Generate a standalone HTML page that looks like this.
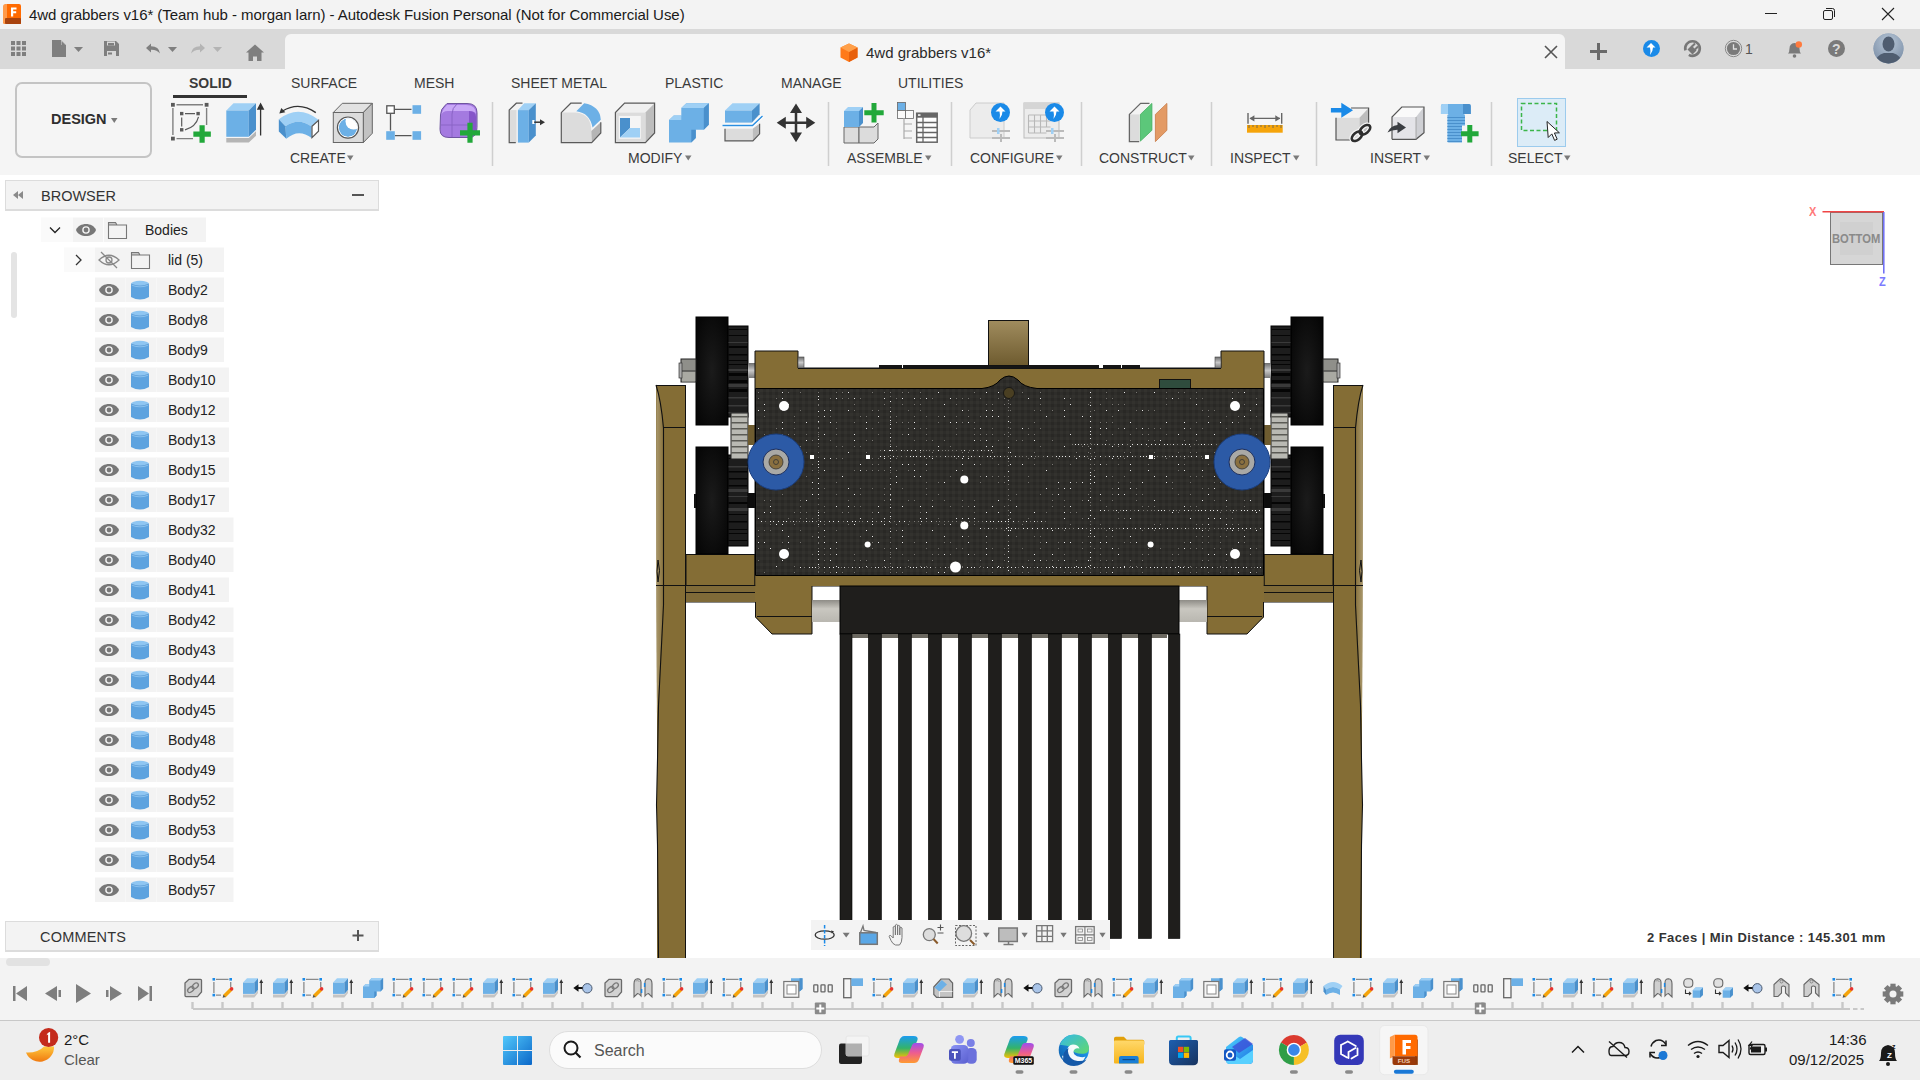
<!DOCTYPE html>
<html><head><meta charset="utf-8"><title>Fusion</title><style>
*{margin:0;padding:0;box-sizing:border-box}
html,body{width:1920px;height:1080px;overflow:hidden;background:#fff;font-family:"Liberation Sans",sans-serif;color:#3c3c3c}
.a{position:absolute}
.t{position:absolute;white-space:nowrap;line-height:1}
svg{position:absolute;overflow:visible}
</style></head>
<body>
<div class="a" style="left:0;top:0;width:1920px;height:29px;background:#f3f3f3"></div>
<div class="a" style="left:0;top:29px;width:1920px;height:40px;background:#d9d9d9"></div>
<div class="a" style="left:285px;top:34px;width:1280px;height:35px;background:#f5f5f5;border-radius:6px 6px 0 0"></div>
<div class="a" style="left:0;top:69px;width:1920px;height:106px;background:#f5f5f5"></div>
<div class="a" style="left:0;top:958px;width:1920px;height:62px;background:#f3f3f3"></div>
<div class="a" style="left:0;top:1020px;width:1920px;height:1px;background:#c8c8c8"></div>
<div class="a" style="left:0;top:1021px;width:1920px;height:59px;background:#eeeeee"></div>
<svg class="a" style="left:0;top:0" width="30" height="29" viewBox="0 0 30 29">
<path d="M4.5,6 Q4.5,4 6.5,4 L19,4 Q21,4 21,6 L21,24 L5,24 Q3,24 3,22 L3,7 Z" fill="#ff6a00"/>
<path d="M3,6.5 Q3,4 5.5,4 L7,4 L7,24 L5,24 Q3,24 3,22 Z" fill="#ff9a4a"/>
<rect x="5" y="18" width="16" height="6" rx="1" fill="#a8430e"/>
<path d="M11,7.5 h5.5 v2 h-3.3 v1.8 h3 v2 h-3 v3.2 h-2.2 z" fill="#fff"/>
</svg>
<div class="t" style="left:29px;top:7px;font-size:15px;color:#1a1a1a;letter-spacing:-0.05px">4wd grabbers v16* (Team hub - morgan larn) - Autodesk Fusion Personal (Not for Commercial Use)</div>
<div class="a" style="left:1765px;top:13px;width:12px;height:1px;background:#222"></div>
<svg class="a" style="left:1820px;top:5px" width="20" height="20" viewBox="0 0 20 20">
<rect x="3.5" y="5.5" width="9" height="9" rx="1.5" fill="none" stroke="#222" stroke-width="1"/>
<path d="M6,3.5 h6.5 q2,0 2,2 v6.5" fill="none" stroke="#222" stroke-width="1"/></svg>
<svg class="a" style="left:1878px;top:4px" width="20" height="20" viewBox="0 0 20 20">
<path d="M4,4 L16,16 M16,4 L4,16" stroke="#222" stroke-width="1.1"/></svg>
<svg class="a" style="left:0;top:29px" width="290" height="40" viewBox="0 29 290 40"><rect x="11.0" y="41.0" width="4" height="4" fill="#7f7f7f"/><rect x="11.0" y="46.5" width="4" height="4" fill="#7f7f7f"/><rect x="11.0" y="52.0" width="4" height="4" fill="#7f7f7f"/><rect x="16.5" y="41.0" width="4" height="4" fill="#7f7f7f"/><rect x="16.5" y="46.5" width="4" height="4" fill="#7f7f7f"/><rect x="16.5" y="52.0" width="4" height="4" fill="#7f7f7f"/><rect x="22.0" y="41.0" width="4" height="4" fill="#7f7f7f"/><rect x="22.0" y="46.5" width="4" height="4" fill="#7f7f7f"/><rect x="22.0" y="52.0" width="4" height="4" fill="#7f7f7f"/><path d="M52,40 h9 l5,5 v12 h-14 z" fill="#7f7f7f"/><path d="M61,40 v5 h5" fill="#d9d9d9"/><path d="M61.5,41 l4,4 h-4z" fill="#7f7f7f"/><path d="M74,47 h9 l-4.5,5 z" fill="#7f7f7f"/><path d="M104,41 h12 l3,3 v12 h-15 z" fill="#7f7f7f"/><rect x="107" y="41.5" width="8" height="4" fill="#d9d9d9"/><rect x="108" y="43" width="6" height="2.5" fill="#7f7f7f"/><rect x="107" y="51" width="9" height="5" fill="#d9d9d9"/><rect x="108" y="52.5" width="4" height="2" fill="#7f7f7f"/><path d="M146,48 l5,-4.5 v2.7 q8,0 9,7.3 q-3,-4 -9,-3.8 v2.8 z" fill="#7f7f7f"/><path d="M168,47 h9 l-4.5,5 z" fill="#7f7f7f"/><path d="M205,48 l-5,-4.5 v2.7 q-8,0 -9,7.3 q3,-4 9,-3.8 v2.8 z" fill="#b4b4b4"/><path d="M213,47 h9 l-4.5,5 z" fill="#b4b4b4"/><path d="M255,44.5 l9,8 h-2.5 v8.5 h-4.5 v-4.5 h-4 v4.5 h-4.5 v-8.5 h-2.5 z" fill="#7f7f7f"/></svg>
<svg class="a" style="left:838px;top:42px" width="22" height="22" viewBox="0 0 22 22">
<path d="M11,1.5 L19.5,5.5 L19.5,15.5 L11,20 L2.5,15.5 L2.5,5.5 Z" fill="#ff7a1a"/>
<path d="M11,10 L19.5,5.5 L19.5,15.5 L11,20 Z" fill="#e8600c"/>
<path d="M11,1.5 L19.5,5.5 L11,10 L2.5,5.5 Z" fill="#ffa04a"/></svg>
<div class="t" style="left:866px;top:45px;font-size:15px;color:#2b2b2b">4wd grabbers v16*</div>
<svg class="a" style="left:1542px;top:43px" width="18" height="18" viewBox="0 0 18 18">
<path d="M3,3 L15,15 M15,3 L3,15" stroke="#555" stroke-width="1.6"/></svg>
<svg class="a" style="left:1580px;top:30px" width="340" height="38" viewBox="1580 30 340 38">
<path d="M1598.5,43 v17 M1590,51.5 h17" stroke="#6a6a6a" stroke-width="3"/>
<circle cx="1651.5" cy="48.5" r="8.5" fill="#1a8ae8"/>
<path d="M1651,43 l4.5,4.5 h-2.5 q0,4 -3,7.5 q1,-3.5 0,-7.5 h-3.5 z" fill="#fff"/>
<path d="M1685.45,50.39 A7.3,7.3 0 1 1 1688.85,54.82" fill="none" stroke="#777" stroke-width="2.6"/>
<path d="M1687.5,49.5 l4,-4 l5,5 l-4,4z" fill="#777"/><path d="M1692,46.5 l3,-3 M1695,49.5 l3,-3" stroke="#777" stroke-width="2"/>
<circle cx="1733.5" cy="48.5" r="8.2" fill="none" stroke="#8a8a8a" stroke-width="1"/><circle cx="1733.5" cy="48.5" r="6.6" fill="#7a7a7a"/>
<path d="M1733.5,44.3 v4.7 h3.5" stroke="#e0e0e0" stroke-width="1.3" fill="none"/>
<path d="M1788,53.5 q1.5,-1.5 1.5,-5 q0,-5 5,-5.5 q5,.5 5,5.5 q0,3.5 1.5,5 z" fill="#7a7a7a"/><circle cx="1794.5" cy="56" r="1.8" fill="#7a7a7a"/>
<circle cx="1798.8" cy="44.5" r="3.2" fill="#ff7a3d"/>
<circle cx="1836.5" cy="48.5" r="8.5" fill="#7a7a7a"/>
<circle cx="1888.5" cy="48.5" r="15" fill="#8ea3bd"/>
</svg>
<div class="t" style="left:1745px;top:42px;font-size:14px;color:#555">1</div>
<div class="t" style="left:1832px;top:41.5px;font-size:14px;font-weight:bold;color:#d9d9d9">?</div>
<svg class="a" style="left:1873px;top:33px" width="31" height="31" viewBox="0 0 31 31">
<defs><clipPath id="avc"><circle cx="15.5" cy="15.5" r="15"/></clipPath><radialGradient id="avg" cx=".5" cy=".3" r=".7"><stop offset="0" stop-color="#b9c8d8"/><stop offset="1" stop-color="#7d90a8"/></radialGradient></defs>
<circle cx="15.5" cy="15.5" r="15" fill="url(#avg)"/>
<g clip-path="url(#avc)" fill="#4f5d70"><ellipse cx="15.5" cy="11" rx="6" ry="7.5"/><path d="M2,31 q1,-9 9,-11 h9 q8,2 9,11 z"/></g></svg>
<div class="a" style="left:15px;top:82px;width:137px;height:76px;border:2px solid #c4c4c4;border-radius:7px"></div>
<div class="t" style="left:51px;top:112px;font-size:14.5px;font-weight:bold;color:#2e2e2e">DESIGN</div>
<div class="t" style="left:189px;top:76px;font-size:14px;font-weight:bold;color:#3a3a3a">SOLID</div>
<div class="t" style="left:291px;top:76px;font-size:14px;font-weight:normal;color:#3a3a3a">SURFACE</div>
<div class="t" style="left:414px;top:76px;font-size:14px;font-weight:normal;color:#3a3a3a">MESH</div>
<div class="t" style="left:511px;top:76px;font-size:14px;font-weight:normal;color:#3a3a3a">SHEET METAL</div>
<div class="t" style="left:665px;top:76px;font-size:14px;font-weight:normal;color:#3a3a3a">PLASTIC</div>
<div class="t" style="left:781px;top:76px;font-size:14px;font-weight:normal;color:#3a3a3a">MANAGE</div>
<div class="t" style="left:898px;top:76px;font-size:14px;font-weight:normal;color:#3a3a3a">UTILITIES</div>
<div class="a" style="left:173px;top:95px;width:74px;height:3px;background:#333"></div>
<div class="t" style="left:290px;top:151px;font-size:14px;color:#3a3a3a">CREATE</div>
<div class="t" style="left:628px;top:151px;font-size:14px;color:#3a3a3a">MODIFY</div>
<div class="t" style="left:847px;top:151px;font-size:14px;color:#3a3a3a">ASSEMBLE</div>
<div class="t" style="left:970px;top:151px;font-size:14px;color:#3a3a3a">CONFIGURE</div>
<div class="t" style="left:1099px;top:151px;font-size:14px;color:#3a3a3a">CONSTRUCT</div>
<div class="t" style="left:1230px;top:151px;font-size:14px;color:#3a3a3a">INSPECT</div>
<div class="t" style="left:1370px;top:151px;font-size:14px;color:#3a3a3a">INSERT</div>
<div class="t" style="left:1508px;top:151px;font-size:14px;color:#3a3a3a">SELECT</div>
<svg class="a" style="left:0;top:69px" width="1920" height="106" viewBox="0 69 1920 106">
<path d="M347,155.5 h6.5 l-3.25,5 z" fill="#7a7a7a"/>
<path d="M685,155.5 h6.5 l-3.25,5 z" fill="#7a7a7a"/>
<path d="M925,155.5 h6.5 l-3.25,5 z" fill="#7a7a7a"/>
<path d="M1056,155.5 h6.5 l-3.25,5 z" fill="#7a7a7a"/>
<path d="M1188,155.5 h6.5 l-3.25,5 z" fill="#7a7a7a"/>
<path d="M1293,155.5 h6.5 l-3.25,5 z" fill="#7a7a7a"/>
<path d="M1423.5,155.5 h6.5 l-3.25,5 z" fill="#7a7a7a"/>
<path d="M1564,155.5 h6.5 l-3.25,5 z" fill="#7a7a7a"/>
<path d="M111,118 h6.5 l-3.25,5 z" fill="#7a7a7a"/>
<rect x="491.75" y="102" width="1.5" height="64" fill="#cfcfcf"/>
<rect x="827.75" y="102" width="1.5" height="64" fill="#cfcfcf"/>
<rect x="950.75" y="102" width="1.5" height="64" fill="#cfcfcf"/>
<rect x="1080.75" y="102" width="1.5" height="64" fill="#cfcfcf"/>
<rect x="1210.75" y="102" width="1.5" height="64" fill="#cfcfcf"/>
<rect x="1315.75" y="102" width="1.5" height="64" fill="#cfcfcf"/>
<rect x="1490.75" y="102" width="1.5" height="64" fill="#cfcfcf"/>
<rect x="1517.5" y="98.5" width="48" height="48" fill="#dcecf7" stroke="#9ccbed" stroke-width="1"/>
<rect x="1521.5" y="103.5" width="35" height="27" fill="none" stroke="#3bb54a" stroke-width="1.5" stroke-dasharray="4 2.5"/>
<path d="M1547,121.5 l1.2,16 l3.6,-3.6 l2.8,6.5 l2.6,-1.2 l-2.8,-6.2 l5,-.2 z" fill="#fff" stroke="#222" stroke-width="1"/>
<path d="M176.5,104.8 h26.5 M172.9,108 v27 M206.6,108 v17 M176.5,138.6 h16.5" stroke="#808080" stroke-width="1.4"/>
<rect x="171.0" y="102.89999999999999" width="3.8" height="3.8" fill="#5a5a5a"/>
<rect x="204.7" y="102.89999999999999" width="3.8" height="3.8" fill="#5a5a5a"/>
<rect x="171.0" y="136.7" width="3.8" height="3.8" fill="#5a5a5a"/>
<path d="M185,113.6 h10 M181.7,117.5 v9 M185,129.8 q11,-3 13.5,-13" fill="none" stroke="#5a5a5a" stroke-width="1.2"/>
<rect x="180.0" y="111.89999999999999" width="3.4" height="3.4" fill="#5a5a5a"/>
<rect x="196.4" y="111.89999999999999" width="3.4" height="3.4" fill="#5a5a5a"/>
<rect x="180.0" y="128.10000000000002" width="3.4" height="3.4" fill="#5a5a5a"/>
<path d="M199.5,125.35h5.2v6.15h6.15v5.2h-6.15v6.15h-5.2v-6.15h-6.15v-5.2h6.15z" fill="#22a83a"/>
<path d="M226.3,110.5 l7.2,-7.3 h22.5 l-7.2,7.3 z" fill="#9fd0f5"/>
<rect x="226.3" y="110.5" width="22.5" height="26.3" fill="#6cb0e6"/>
<path d="M248.8,110.5 l7.2,-7.3 v26.5 l-7.2,7.1 z" fill="#4a90cc"/>
<path d="M226.3,138 h22.5 l7.2,-6.8 v4.6 l-7.2,6.8 h-22.5 z" fill="#b5b5b5"/>
<path d="M260.6,135.5 v-28 M257.9,109 l2.7,-5.2 l2.7,5.2 z" stroke="#333" stroke-width="1.3" fill="#333"/>
<path d="M315.8,112.6 Q299,101 282.5,111" fill="none" stroke="#333" stroke-width="1.4"/><path d="M279.3,113.5 l2,-5.5 l4,4.2 z" fill="#333"/>
<path d="M278.8,119.3 Q298.5,104 318.5,119.8 L311.5,126.5 Q298.5,117 285.4,126.3 Z" fill="#9fd0f5"/>
<path d="M285.4,126.3 Q298.5,117 311.5,126.5 L311.7,138 Q298.5,128 286.3,138.8 Z" fill="#6cb0e6"/>
<path d="M278.8,119.3 L285.4,126.3 L286.3,138.8 L278.8,131.5 Z" fill="#4a90cc"/>
<path d="M312,126.3 L318.5,120.3 L318.5,131.3 L312,137.6 Z" fill="#fff" stroke="#555" stroke-width="1.2"/>
<path d="M333.3,112.5 l9,-9.2 h30 l-9,9.2 z" fill="#e2e2e2" stroke="#666" stroke-width="1"/>
<path d="M363.3,112.5 l9,-9.2 v30 l-9,9.3 z" fill="#c2c2c2" stroke="#666" stroke-width="1"/>
<rect x="333.3" y="112.5" width="30" height="30" fill="#dcdcdc" stroke="#666" stroke-width="1"/>
<defs><clipPath id="hc"><circle cx="348" cy="127.6" r="9.3"/></clipPath></defs>
<circle cx="348" cy="127.6" r="10.6" fill="#fff" stroke="#555" stroke-width="1.2"/><g clip-path="url(#hc)"><circle cx="348" cy="127.6" r="9.3" fill="#6cb0e6"/><circle cx="353.5" cy="121.5" r="8" fill="#fff"/></g>
<path d="M395,109.3 h16.5 M390.5,114 v16.5 M395,135.6 h16.5" stroke="#555" stroke-width="1.3"/>
<rect x="386.8" y="105.8" width="7.5" height="7.5" fill="#fff" stroke="#555" stroke-width="1.3"/>
<rect x="412.5" y="105.2" width="8.6" height="8.6" fill="#6cb0e6"/>
<rect x="386.2" y="131.2" width="8.6" height="8.6" fill="#6cb0e6"/>
<rect x="412.5" y="131.2" width="8.6" height="8.6" fill="#6cb0e6"/>
<path d="M440.5,115 q0,-6 5,-10 l1.5,-1.5 h20 q10,0 10,9 v15 q0,10 -8,10 h-20 q-9,0 -9,-8z" fill="#a47ae0" stroke="#6f55a0" stroke-width="1"/>
<path d="M441,116 q1,-6 6,-11 h19 q10,0 10,9 q-1,-3 -7,-3 h-21 q-6,0 -7,5z" fill="#c9a8f7"/>
<path d="M469,111 q7,0 7,6 v16 q-2,4 -7,4z" fill="#8656c9"/>
<path d="M457,104 q-5,4 -5,10 v23 M441,125 h28" fill="none" stroke="#8a64c6" stroke-width="1"/>
<path d="M467.4,122.80000000000001h5.2v7.4h7.4v5.2h-7.4v7.4h-5.2v-7.4h-7.4v-5.2h7.4z" fill="#22a83a"/>
<path d="M509.2,142.6 V110.1 L516.3,103.2 H522.5 L516.5,110.1 V142.6 Z" fill="#f3f3f3"/>
<path d="M509.2,110.1 H516.5 V142.6 H509.2 Z" fill="#dcdcdc"/>
<path d="M515.8,142.6 H509.2 V110.1 L516.3,103.2 H522.5" fill="none" stroke="#5a5a5a" stroke-width="1.2"/>
<path d="M517.9,110.1 L524.2,103.2 H535.8 L528.8,110.1 Z" fill="#9fd0f5"/><rect x="517.9" y="110.1" width="10.9" height="32.5" fill="#6cb0e6"/><path d="M528.8,110.1 L535.8,103.2 V135.5 L528.8,142.6 Z" fill="#4a90cc"/>
<rect x="532.3" y="120" width="2.2" height="4" fill="#fff"/><path d="M534.2,122.2 H541" stroke="#333" stroke-width="1.5"/><path d="M540,119.2 L545,122.2 L540,125.2 Z" fill="#333"/>
<path d="M561.3,112.6 L570.8,103.2 H581.7 L575.8,112.6 Z" fill="#f3f3f3"/>
<path d="M561.3,112.6 H575.8 Q591.3,114 591.3,130.9 V142.6 H561.3 Z" fill="#dcdcdc"/>
<path d="M591.3,130.9 L600.8,122.2 V133 L591.7,142.6 Z" fill="#b5b5b5"/>
<path d="M584.2,103.2 Q600,106 600.8,119.7 L592.5,127.6 Q590,113 576.3,111.3 Z" fill="#6cb0e6"/>
<path d="M561.3,112.6 V142.6 H591.7 L600.8,133 V122.2 M561.3,112.6 L570.8,103.2 H581.7" fill="none" stroke="#5a5a5a" stroke-width="1.2"/>
<path d="M615.4,112.6 L624.6,103.2 H654.6 L645.4,112.6 Z" fill="#f0f0f0"/><path d="M645.4,112.6 L654.6,103.2 V133 L645.4,142.6 Z" fill="#bdbdbd"/><rect x="615.4" y="112.6" width="30" height="30" fill="#dcdcdc"/>
<path d="M615.4,142.6 V112.6 L624.6,103.2 H654.6 V133 L645.4,142.6 Z" fill="none" stroke="#5a5a5a" stroke-width="1.2"/>
<rect x="618.8" y="115.9" width="22" height="22.9" fill="#f5f5f5"/>
<path d="M620,118 H630 V128 L620,137.6 Z" fill="#4a90cc"/><path d="M630,128 H640 V137.6 H620 Z" fill="#9fd0f5"/>
<path d="M669,120 L673.8,115.5 H681.3 V108 L686.3,103.2 H708.8 V124.7 L703.8,129.7 H695.8 V138 L691.3,142.6 H669 Z" fill="#6cb0e6"/>
<path d="M669,120 L673.8,115.5 H681.3 V120 Z M681.3,108 L686.3,103.2 H708.8 L703.8,108 Z" fill="#9fd0f5"/>
<path d="M703.8,108 L708.8,103.2 V124.7 L703.8,129.7 Z M691.3,129.7 H695.8 V138 L691.3,142.6 Z" fill="#4a90cc"/>
<path d="M725,110.5 L732.5,103.2 H759.6 L752,110.5 Z" fill="#9fd0f5"/><rect x="725" y="110.5" width="27" height="12.1" fill="#6cb0e6"/><path d="M752,110.5 L759.6,103.2 V114.3 L752,122.6 Z" fill="#4a90cc"/>
<path d="M722.5,125.5 H752.5 L762.5,116" fill="none" stroke="#fff" stroke-width="3.5"/><path d="M722.5,125.5 H752.5 L762.5,116" fill="none" stroke="#2a8ee0" stroke-width="1.4"/>
<path d="M725,128.8 H752.9 L759.6,123.8 V133.8 L752.9,140.9 H725 Z" fill="#dcdcdc"/><path d="M752.9,128.8 L759.6,123.8 V133.8 L752.9,140.9 Z" fill="#bdbdbd"/>
<path d="M725,128.8 V140.9 H752.9 L759.6,133.8 V123.8" fill="none" stroke="#5a5a5a" stroke-width="1.2"/>
<path d="M796,108 V138 M781,122.8 H811" stroke="#333" stroke-width="2.5"/>
<path d="M796,103.4 L790,113 H802 Z M796,142.2 L790,132.6 H802 Z M776.7,122.8 L785.8,116.8 V128.8 Z M815.3,122.8 L806.2,116.8 V128.8 Z" fill="#333"/>
<path d="M844,127 h15 v16 h-15z" fill="#dcdcdc" stroke="#666" stroke-width="1"/><path d="M859,127 h15 l4,-4 v16 l-4,4 h-15z" fill="#dcdcdc" stroke="#666" stroke-width="1"/>
<path d="M844,111 l4,-4 h15 l-4,4z" fill="#9fd0f5"/><rect x="844" y="111" width="15" height="16" fill="#6cb0e6"/><path d="M859,111 l4,-4 v16 l-4,4z" fill="#4a90cc"/>
<path d="M871.5,103.0h5v7.199999999999999h7.199999999999999v5h-7.199999999999999v7.199999999999999h-5v-7.199999999999999h-7.199999999999999v-5h7.199999999999999z" fill="#22a83a"/>
<rect x="897.5" y="102.5" width="8" height="8" fill="#6cb0e6" stroke="#666" stroke-width=".8"/><rect x="897.5" y="110.5" width="8" height="8" fill="#fafafa" stroke="#666" stroke-width=".8"/><rect x="905.5" y="110.5" width="8" height="8" fill="#fafafa" stroke="#666" stroke-width=".8"/>
<path d="M904,118 v21 M904,124 h8 M904,131 h8 M904,138 h8" stroke="#aaa" stroke-width="1.2"/>
<rect x="916.7" y="113.2" width="20.5" height="29" fill="#fff" stroke="#666" stroke-width="1.5"/><rect x="916.7" y="113.2" width="20.5" height="4.5" fill="#666"/><rect x="918" y="114.3" width="2.5" height="1.5" fill="#fff"/>
<path d="M916.7,122.5 h20.5 M916.7,127.5 h20.5 M916.7,132.5 h20.5 M916.7,137.5 h20.5 M923,117 v25" stroke="#666" stroke-width="1.3"/>
<path d="M970,110 l6,-7 h28 v35 h-34z" fill="#ececec" stroke="#ccc" stroke-width="1"/>
<path d="M992,131 h18 M992,138 h18 M1001,134 v8" stroke="#bbb" stroke-width="2"/><rect x="997" y="128" width="2.5" height="6" fill="#9fd0f5"/>
<circle cx="1000.5" cy="112.5" r="9.5" fill="#1a8ae8"/><path d="M1000.5,106.5 l5,5 h-3 q0,4 -3,7.5 q1,-3.5 0,-7.5 h-4 z" fill="#fff"/>
<rect x="1024" y="103" width="35" height="35" fill="#ececec" stroke="#bbb" stroke-width="1"/><rect x="1024" y="103" width="35" height="6" fill="#d5d5d5"/>
<path d="M1028.5,115 h22 M1028.5,121 h22 M1028.5,127 h22 M1028.5,133 h18 M1028.5,115 v18 M1034.5,115 v18 M1040.5,115 v18 M1046.5,115 v12" stroke="#b8b8b8" stroke-width="1.1"/>
<path d="M1046,131 h18 M1046,138 h18 M1055,134 v8" stroke="#bbb" stroke-width="2"/><rect x="1051" y="128" width="2.5" height="6" fill="#9fd0f5"/>
<circle cx="1054.5" cy="112.5" r="9.5" fill="#1a8ae8"/><path d="M1054.5,106.5 l5,5 h-3 q0,4 -3,7.5 q1,-3.5 0,-7.5 h-4 z" fill="#fff"/>
<path d="M1129.4,114.4 L1140.6,103.4 H1149.5 L1140.4,114.4 Z" fill="#f3f3f3"/><rect x="1129.4" y="114.4" width="10" height="27.2" fill="#dcdcdc"/>
<path d="M1139.2,141.6 H1129.4 V114.4 L1140.6,103.4 H1149.5" fill="none" stroke="#666" stroke-width="1.3"/>
<path d="M1140.4,114.4 L1151.9,103.4 V130.3 L1140.4,141.1 Z" fill="#5cc77a" stroke="#3fae5c" stroke-width=".8"/>
<path d="M1155.4,114.4 L1166.9,103.4 V130.3 L1155.4,141.6 Z" fill="#e39a64" stroke="#c87a45" stroke-width=".8"/>
<path d="M1248,113 v10.8 M1281.7,113 v10.8 M1250,118.4 h30" stroke="#666" stroke-width="1.4"/><path d="M1249.4,118.4 l5,-3.2 v6.4z M1280.3,118.4 l-5,-3.2 v6.4z" fill="#666"/>
<rect x="1247" y="125" width="35.7" height="7.7" fill="#f5a40a"/><path d="M1249,125 v3 M1253,125 v2 M1257,125 v3 M1261,125 v2 M1265,125 v3 M1269,125 v2 M1273,125 v3 M1277,125 v2 M1281,125 v3" stroke="#7a6a4a" stroke-width="1"/>
<path d="M1336,117.8 L1342,108 H1368.6 L1359.5,117.8 Z" fill="#f3f3f3"/><rect x="1336" y="117.8" width="23.5" height="22.2" fill="#dcdcdc"/><path d="M1359.5,117.8 L1368.6,108 V132 L1359.5,140 Z" fill="#bdbdbd"/>
<path d="M1351,108 H1368.6 V132 M1350,140 H1336 V117.8" fill="none" stroke="#555" stroke-width="1.2"/>
<path d="M1330.9,108 h10.4 v-5.2 l11.7,7.5 l-11.7,7.5 v-5.2 h-10.4z" fill="#1a8ae8"/>
<g fill="none" stroke="#f5f5f5" stroke-width="5"><ellipse cx="1357" cy="136.2" rx="6.2" ry="3.6" transform="rotate(-40 1357 136.2)"/><ellipse cx="1365" cy="129.8" rx="6.2" ry="3.6" transform="rotate(-40 1365 129.8)"/></g>
<g fill="none" stroke="#2e2e2e" stroke-width="2.6"><ellipse cx="1357" cy="136.2" rx="6.2" ry="3.6" transform="rotate(-40 1357 136.2)"/><ellipse cx="1365" cy="129.8" rx="6.2" ry="3.6" transform="rotate(-40 1365 129.8)"/></g>
<path d="M1392,117 L1401.8,107 H1424 L1416,117 Z" fill="#fafafa"/><rect x="1392" y="117" width="24" height="22.3" fill="#e4e4e8"/><path d="M1416,117 L1424,107 V132.8 L1416,139.3 Z" fill="#cfd0d4"/>
<path d="M1392,139.3 V117 L1401.8,107 H1424 V132.8 L1416,139.3 H1392" fill="none" stroke="#555" stroke-width="1.2"/><path d="M1416,117 V139.3" stroke="#999" stroke-width=".8"/>
<path d="M1387.5,132.5 q3,-7 10,-7.5 v-3.3 l8.5,5.8 l-8.5,5.8 v-3.5 q-6,0 -10,2.7z" fill="#3a3d42"/>
<path d="M1443,104.1 h25.8 q2,0 2,2 v7.8 h-29.9 v-7.8 q0,-2 2,-2z" fill="#6cb0e6"/><path d="M1441,106 q0,-2 2,-2 h5 v9.9 h-7z" fill="#9fd0f5"/><path d="M1463,104.1 h5.8 q2,0 2,2 v7.8 h-7.8z" fill="#4a90cc"/>
<rect x="1447.4" y="113.9" width="17.6" height="28.6" rx="1.5" fill="#6cb0e6"/>
<path d="M1447.4,117.5 h17.6" stroke="#4a90cc" stroke-width="1"/>
<path d="M1447.4,120.5 h17.6" stroke="#4a90cc" stroke-width="1"/>
<path d="M1447.4,123.5 h17.6" stroke="#4a90cc" stroke-width="1"/>
<path d="M1447.4,126.5 h17.6" stroke="#4a90cc" stroke-width="1"/>
<path d="M1447.4,129.5 h17.6" stroke="#4a90cc" stroke-width="1"/>
<path d="M1447.4,132.5 h17.6" stroke="#4a90cc" stroke-width="1"/>
<path d="M1447.4,135.5 h17.6" stroke="#4a90cc" stroke-width="1"/>
<path d="M1447.4,138.5 h17.6" stroke="#4a90cc" stroke-width="1"/>
<path d="M1447.4,141.5 h17.6" stroke="#4a90cc" stroke-width="1"/>
<path d="M1462,125.5 h12 v6 h6 v12 h-6 v0 h-12z" fill="#f5f5f5"/>
<path d="M1467.3,125.00000000000001h5v6.300000000000001h6.300000000000001v5h-6.300000000000001v6.300000000000001h-5v-6.300000000000001h-6.300000000000001v-5h6.300000000000001z" fill="#22a83a"/>
</svg>
<div class="a" style="left:5px;top:180px;width:374px;height:31px;background:#f3f3f3;border:1px solid #dcdcdc;border-bottom:2px solid #dcdcdc"></div>
<div class="t" style="left:41px;top:189px;font-size:14.5px;color:#333;letter-spacing:0px">BROWSER</div>
<div class="a" style="left:921px;top:0"></div>
<div class="a" style="left:5px;top:921px;width:374px;height:31px;background:#f3f3f3;border:1px solid #dcdcdc;border-bottom:2px solid #dcdcdc"></div>
<div class="t" style="left:40px;top:930px;font-size:14.5px;color:#333;letter-spacing:0.2px">COMMENTS</div>
<svg class="a" style="left:0;top:170px" width="390" height="790" viewBox="0 170 390 790">
<path d="M13,195 l5,-4 v8z M18,195 l5,-4 v8z" fill="#8a8a8a"/>
<rect x="352" y="194" width="12" height="2" fill="#555"/>
<path d="M358,930 v11 M352.5,935.5 h11" stroke="#555" stroke-width="2"/>
<rect x="11" y="252" width="6" height="66" rx="3" fill="#e4e4e4"/>
<rect x="41" y="217.5" width="32" height="24.5" fill="#fafafa"/>
<rect x="73" y="217.5" width="133" height="24.5" fill="#f3f3f3"/>
<rect x="103" y="217.5" width="1" height="24.5" fill="#fbfbfb"/>
<path d="M50,227.5 l5,5 l5,-5" fill="none" stroke="#222" stroke-width="1.3"/>
<path d="M76,230 c3,-8 17,-8 20,0 c-3,8 -17,8 -20,0z" fill="#777"/><circle cx="86" cy="230" r="3.8" fill="#f3f3f3"/><circle cx="86" cy="230" r="2.4" fill="#777"/>
<path d="M108.5,225 v-2.5 h7 l1.5,2.5z" fill="#c4c4c4"/><path d="M108.5,222.5 h7 l1.5,2.5 h9.5 v13.5 h-18z M108.5,225 h18" fill="none" stroke="#777" stroke-width="1.1"/>
<rect x="64" y="247.5" width="31" height="24.5" fill="#fafafa"/>
<rect x="95" y="247.5" width="129" height="24.5" fill="#f3f3f3"/>
<path d="M76,255 l5,5 l-5,5" fill="none" stroke="#333" stroke-width="1.3"/>
<path d="M99,260 q10,-9.5 20,0 q-10,9.5 -20,0z" fill="none" stroke="#888" stroke-width="1.3"/><circle cx="109" cy="260" r="3" fill="none" stroke="#888" stroke-width="1.3"/><path d="M101,252 l16,16" stroke="#888" stroke-width="1.3"/>
<path d="M131.5,255 v-2.5 h7 l1.5,2.5z" fill="#c4c4c4"/><path d="M131.5,252.5 h7 l1.5,2.5 h9.5 v13.5 h-18z M131.5,255 h18" fill="none" stroke="#777" stroke-width="1.1"/>
<rect x="95" y="277.5" width="129" height="24.5" fill="#f3f3f3"/>
<rect x="125" y="277.5" width="1" height="24.5" fill="#f7f7f7"/><rect x="156" y="277.5" width="1" height="24.5" fill="#f7f7f7"/>
<path d="M99,290 c3,-8 17,-8 20,0 c-3,8 -17,8 -20,0z" fill="#777"/><circle cx="109" cy="290" r="3.8" fill="#f3f3f3"/><circle cx="109" cy="290" r="2.4" fill="#777"/>
<path d="M131,284 v13 q9,5 18,0 v-13 z" fill="#5ea3df"/><ellipse cx="140" cy="284" rx="9" ry="3.2" fill="#8fc6f2"/><path d="M131,284 q9,4 18,0" fill="none" stroke="#4a8cc9" stroke-width=".6"/>
<rect x="95" y="307.5" width="129" height="24.5" fill="#f3f3f3"/>
<rect x="125" y="307.5" width="1" height="24.5" fill="#f7f7f7"/><rect x="156" y="307.5" width="1" height="24.5" fill="#f7f7f7"/>
<path d="M99,320 c3,-8 17,-8 20,0 c-3,8 -17,8 -20,0z" fill="#777"/><circle cx="109" cy="320" r="3.8" fill="#f3f3f3"/><circle cx="109" cy="320" r="2.4" fill="#777"/>
<path d="M131,314 v13 q9,5 18,0 v-13 z" fill="#5ea3df"/><ellipse cx="140" cy="314" rx="9" ry="3.2" fill="#8fc6f2"/><path d="M131,314 q9,4 18,0" fill="none" stroke="#4a8cc9" stroke-width=".6"/>
<rect x="95" y="337.5" width="129" height="24.5" fill="#f3f3f3"/>
<rect x="125" y="337.5" width="1" height="24.5" fill="#f7f7f7"/><rect x="156" y="337.5" width="1" height="24.5" fill="#f7f7f7"/>
<path d="M99,350 c3,-8 17,-8 20,0 c-3,8 -17,8 -20,0z" fill="#777"/><circle cx="109" cy="350" r="3.8" fill="#f3f3f3"/><circle cx="109" cy="350" r="2.4" fill="#777"/>
<path d="M131,344 v13 q9,5 18,0 v-13 z" fill="#5ea3df"/><ellipse cx="140" cy="344" rx="9" ry="3.2" fill="#8fc6f2"/><path d="M131,344 q9,4 18,0" fill="none" stroke="#4a8cc9" stroke-width=".6"/>
<rect x="95" y="367.5" width="134" height="24.5" fill="#f3f3f3"/>
<rect x="125" y="367.5" width="1" height="24.5" fill="#f7f7f7"/><rect x="156" y="367.5" width="1" height="24.5" fill="#f7f7f7"/>
<path d="M99,380 c3,-8 17,-8 20,0 c-3,8 -17,8 -20,0z" fill="#777"/><circle cx="109" cy="380" r="3.8" fill="#f3f3f3"/><circle cx="109" cy="380" r="2.4" fill="#777"/>
<path d="M131,374 v13 q9,5 18,0 v-13 z" fill="#5ea3df"/><ellipse cx="140" cy="374" rx="9" ry="3.2" fill="#8fc6f2"/><path d="M131,374 q9,4 18,0" fill="none" stroke="#4a8cc9" stroke-width=".6"/>
<rect x="95" y="397.5" width="134" height="24.5" fill="#f3f3f3"/>
<rect x="125" y="397.5" width="1" height="24.5" fill="#f7f7f7"/><rect x="156" y="397.5" width="1" height="24.5" fill="#f7f7f7"/>
<path d="M99,410 c3,-8 17,-8 20,0 c-3,8 -17,8 -20,0z" fill="#777"/><circle cx="109" cy="410" r="3.8" fill="#f3f3f3"/><circle cx="109" cy="410" r="2.4" fill="#777"/>
<path d="M131,404 v13 q9,5 18,0 v-13 z" fill="#5ea3df"/><ellipse cx="140" cy="404" rx="9" ry="3.2" fill="#8fc6f2"/><path d="M131,404 q9,4 18,0" fill="none" stroke="#4a8cc9" stroke-width=".6"/>
<rect x="95" y="427.5" width="134" height="24.5" fill="#f3f3f3"/>
<rect x="125" y="427.5" width="1" height="24.5" fill="#f7f7f7"/><rect x="156" y="427.5" width="1" height="24.5" fill="#f7f7f7"/>
<path d="M99,440 c3,-8 17,-8 20,0 c-3,8 -17,8 -20,0z" fill="#777"/><circle cx="109" cy="440" r="3.8" fill="#f3f3f3"/><circle cx="109" cy="440" r="2.4" fill="#777"/>
<path d="M131,434 v13 q9,5 18,0 v-13 z" fill="#5ea3df"/><ellipse cx="140" cy="434" rx="9" ry="3.2" fill="#8fc6f2"/><path d="M131,434 q9,4 18,0" fill="none" stroke="#4a8cc9" stroke-width=".6"/>
<rect x="95" y="457.5" width="134" height="24.5" fill="#f3f3f3"/>
<rect x="125" y="457.5" width="1" height="24.5" fill="#f7f7f7"/><rect x="156" y="457.5" width="1" height="24.5" fill="#f7f7f7"/>
<path d="M99,470 c3,-8 17,-8 20,0 c-3,8 -17,8 -20,0z" fill="#777"/><circle cx="109" cy="470" r="3.8" fill="#f3f3f3"/><circle cx="109" cy="470" r="2.4" fill="#777"/>
<path d="M131,464 v13 q9,5 18,0 v-13 z" fill="#5ea3df"/><ellipse cx="140" cy="464" rx="9" ry="3.2" fill="#8fc6f2"/><path d="M131,464 q9,4 18,0" fill="none" stroke="#4a8cc9" stroke-width=".6"/>
<rect x="95" y="487.5" width="134" height="24.5" fill="#f3f3f3"/>
<rect x="125" y="487.5" width="1" height="24.5" fill="#f7f7f7"/><rect x="156" y="487.5" width="1" height="24.5" fill="#f7f7f7"/>
<path d="M99,500 c3,-8 17,-8 20,0 c-3,8 -17,8 -20,0z" fill="#777"/><circle cx="109" cy="500" r="3.8" fill="#f3f3f3"/><circle cx="109" cy="500" r="2.4" fill="#777"/>
<path d="M131,494 v13 q9,5 18,0 v-13 z" fill="#5ea3df"/><ellipse cx="140" cy="494" rx="9" ry="3.2" fill="#8fc6f2"/><path d="M131,494 q9,4 18,0" fill="none" stroke="#4a8cc9" stroke-width=".6"/>
<rect x="95" y="517.5" width="138.5" height="24.5" fill="#f3f3f3"/>
<rect x="125" y="517.5" width="1" height="24.5" fill="#f7f7f7"/><rect x="156" y="517.5" width="1" height="24.5" fill="#f7f7f7"/>
<path d="M99,530 c3,-8 17,-8 20,0 c-3,8 -17,8 -20,0z" fill="#777"/><circle cx="109" cy="530" r="3.8" fill="#f3f3f3"/><circle cx="109" cy="530" r="2.4" fill="#777"/>
<path d="M131,524 v13 q9,5 18,0 v-13 z" fill="#5ea3df"/><ellipse cx="140" cy="524" rx="9" ry="3.2" fill="#8fc6f2"/><path d="M131,524 q9,4 18,0" fill="none" stroke="#4a8cc9" stroke-width=".6"/>
<rect x="95" y="547.5" width="138.5" height="24.5" fill="#f3f3f3"/>
<rect x="125" y="547.5" width="1" height="24.5" fill="#f7f7f7"/><rect x="156" y="547.5" width="1" height="24.5" fill="#f7f7f7"/>
<path d="M99,560 c3,-8 17,-8 20,0 c-3,8 -17,8 -20,0z" fill="#777"/><circle cx="109" cy="560" r="3.8" fill="#f3f3f3"/><circle cx="109" cy="560" r="2.4" fill="#777"/>
<path d="M131,554 v13 q9,5 18,0 v-13 z" fill="#5ea3df"/><ellipse cx="140" cy="554" rx="9" ry="3.2" fill="#8fc6f2"/><path d="M131,554 q9,4 18,0" fill="none" stroke="#4a8cc9" stroke-width=".6"/>
<rect x="95" y="577.5" width="134" height="24.5" fill="#f3f3f3"/>
<rect x="125" y="577.5" width="1" height="24.5" fill="#f7f7f7"/><rect x="156" y="577.5" width="1" height="24.5" fill="#f7f7f7"/>
<path d="M99,590 c3,-8 17,-8 20,0 c-3,8 -17,8 -20,0z" fill="#777"/><circle cx="109" cy="590" r="3.8" fill="#f3f3f3"/><circle cx="109" cy="590" r="2.4" fill="#777"/>
<path d="M131,584 v13 q9,5 18,0 v-13 z" fill="#5ea3df"/><ellipse cx="140" cy="584" rx="9" ry="3.2" fill="#8fc6f2"/><path d="M131,584 q9,4 18,0" fill="none" stroke="#4a8cc9" stroke-width=".6"/>
<rect x="95" y="607.5" width="138.5" height="24.5" fill="#f3f3f3"/>
<rect x="125" y="607.5" width="1" height="24.5" fill="#f7f7f7"/><rect x="156" y="607.5" width="1" height="24.5" fill="#f7f7f7"/>
<path d="M99,620 c3,-8 17,-8 20,0 c-3,8 -17,8 -20,0z" fill="#777"/><circle cx="109" cy="620" r="3.8" fill="#f3f3f3"/><circle cx="109" cy="620" r="2.4" fill="#777"/>
<path d="M131,614 v13 q9,5 18,0 v-13 z" fill="#5ea3df"/><ellipse cx="140" cy="614" rx="9" ry="3.2" fill="#8fc6f2"/><path d="M131,614 q9,4 18,0" fill="none" stroke="#4a8cc9" stroke-width=".6"/>
<rect x="95" y="637.5" width="138.5" height="24.5" fill="#f3f3f3"/>
<rect x="125" y="637.5" width="1" height="24.5" fill="#f7f7f7"/><rect x="156" y="637.5" width="1" height="24.5" fill="#f7f7f7"/>
<path d="M99,650 c3,-8 17,-8 20,0 c-3,8 -17,8 -20,0z" fill="#777"/><circle cx="109" cy="650" r="3.8" fill="#f3f3f3"/><circle cx="109" cy="650" r="2.4" fill="#777"/>
<path d="M131,644 v13 q9,5 18,0 v-13 z" fill="#5ea3df"/><ellipse cx="140" cy="644" rx="9" ry="3.2" fill="#8fc6f2"/><path d="M131,644 q9,4 18,0" fill="none" stroke="#4a8cc9" stroke-width=".6"/>
<rect x="95" y="667.5" width="138.5" height="24.5" fill="#f3f3f3"/>
<rect x="125" y="667.5" width="1" height="24.5" fill="#f7f7f7"/><rect x="156" y="667.5" width="1" height="24.5" fill="#f7f7f7"/>
<path d="M99,680 c3,-8 17,-8 20,0 c-3,8 -17,8 -20,0z" fill="#777"/><circle cx="109" cy="680" r="3.8" fill="#f3f3f3"/><circle cx="109" cy="680" r="2.4" fill="#777"/>
<path d="M131,674 v13 q9,5 18,0 v-13 z" fill="#5ea3df"/><ellipse cx="140" cy="674" rx="9" ry="3.2" fill="#8fc6f2"/><path d="M131,674 q9,4 18,0" fill="none" stroke="#4a8cc9" stroke-width=".6"/>
<rect x="95" y="697.5" width="138.5" height="24.5" fill="#f3f3f3"/>
<rect x="125" y="697.5" width="1" height="24.5" fill="#f7f7f7"/><rect x="156" y="697.5" width="1" height="24.5" fill="#f7f7f7"/>
<path d="M99,710 c3,-8 17,-8 20,0 c-3,8 -17,8 -20,0z" fill="#777"/><circle cx="109" cy="710" r="3.8" fill="#f3f3f3"/><circle cx="109" cy="710" r="2.4" fill="#777"/>
<path d="M131,704 v13 q9,5 18,0 v-13 z" fill="#5ea3df"/><ellipse cx="140" cy="704" rx="9" ry="3.2" fill="#8fc6f2"/><path d="M131,704 q9,4 18,0" fill="none" stroke="#4a8cc9" stroke-width=".6"/>
<rect x="95" y="727.5" width="138.5" height="24.5" fill="#f3f3f3"/>
<rect x="125" y="727.5" width="1" height="24.5" fill="#f7f7f7"/><rect x="156" y="727.5" width="1" height="24.5" fill="#f7f7f7"/>
<path d="M99,740 c3,-8 17,-8 20,0 c-3,8 -17,8 -20,0z" fill="#777"/><circle cx="109" cy="740" r="3.8" fill="#f3f3f3"/><circle cx="109" cy="740" r="2.4" fill="#777"/>
<path d="M131,734 v13 q9,5 18,0 v-13 z" fill="#5ea3df"/><ellipse cx="140" cy="734" rx="9" ry="3.2" fill="#8fc6f2"/><path d="M131,734 q9,4 18,0" fill="none" stroke="#4a8cc9" stroke-width=".6"/>
<rect x="95" y="757.5" width="138.5" height="24.5" fill="#f3f3f3"/>
<rect x="125" y="757.5" width="1" height="24.5" fill="#f7f7f7"/><rect x="156" y="757.5" width="1" height="24.5" fill="#f7f7f7"/>
<path d="M99,770 c3,-8 17,-8 20,0 c-3,8 -17,8 -20,0z" fill="#777"/><circle cx="109" cy="770" r="3.8" fill="#f3f3f3"/><circle cx="109" cy="770" r="2.4" fill="#777"/>
<path d="M131,764 v13 q9,5 18,0 v-13 z" fill="#5ea3df"/><ellipse cx="140" cy="764" rx="9" ry="3.2" fill="#8fc6f2"/><path d="M131,764 q9,4 18,0" fill="none" stroke="#4a8cc9" stroke-width=".6"/>
<rect x="95" y="787.5" width="138.5" height="24.5" fill="#f3f3f3"/>
<rect x="125" y="787.5" width="1" height="24.5" fill="#f7f7f7"/><rect x="156" y="787.5" width="1" height="24.5" fill="#f7f7f7"/>
<path d="M99,800 c3,-8 17,-8 20,0 c-3,8 -17,8 -20,0z" fill="#777"/><circle cx="109" cy="800" r="3.8" fill="#f3f3f3"/><circle cx="109" cy="800" r="2.4" fill="#777"/>
<path d="M131,794 v13 q9,5 18,0 v-13 z" fill="#5ea3df"/><ellipse cx="140" cy="794" rx="9" ry="3.2" fill="#8fc6f2"/><path d="M131,794 q9,4 18,0" fill="none" stroke="#4a8cc9" stroke-width=".6"/>
<rect x="95" y="817.5" width="138.5" height="24.5" fill="#f3f3f3"/>
<rect x="125" y="817.5" width="1" height="24.5" fill="#f7f7f7"/><rect x="156" y="817.5" width="1" height="24.5" fill="#f7f7f7"/>
<path d="M99,830 c3,-8 17,-8 20,0 c-3,8 -17,8 -20,0z" fill="#777"/><circle cx="109" cy="830" r="3.8" fill="#f3f3f3"/><circle cx="109" cy="830" r="2.4" fill="#777"/>
<path d="M131,824 v13 q9,5 18,0 v-13 z" fill="#5ea3df"/><ellipse cx="140" cy="824" rx="9" ry="3.2" fill="#8fc6f2"/><path d="M131,824 q9,4 18,0" fill="none" stroke="#4a8cc9" stroke-width=".6"/>
<rect x="95" y="847.5" width="138.5" height="24.5" fill="#f3f3f3"/>
<rect x="125" y="847.5" width="1" height="24.5" fill="#f7f7f7"/><rect x="156" y="847.5" width="1" height="24.5" fill="#f7f7f7"/>
<path d="M99,860 c3,-8 17,-8 20,0 c-3,8 -17,8 -20,0z" fill="#777"/><circle cx="109" cy="860" r="3.8" fill="#f3f3f3"/><circle cx="109" cy="860" r="2.4" fill="#777"/>
<path d="M131,854 v13 q9,5 18,0 v-13 z" fill="#5ea3df"/><ellipse cx="140" cy="854" rx="9" ry="3.2" fill="#8fc6f2"/><path d="M131,854 q9,4 18,0" fill="none" stroke="#4a8cc9" stroke-width=".6"/>
<rect x="95" y="877.5" width="138.5" height="24.5" fill="#f3f3f3"/>
<rect x="125" y="877.5" width="1" height="24.5" fill="#f7f7f7"/><rect x="156" y="877.5" width="1" height="24.5" fill="#f7f7f7"/>
<path d="M99,890 c3,-8 17,-8 20,0 c-3,8 -17,8 -20,0z" fill="#777"/><circle cx="109" cy="890" r="3.8" fill="#f3f3f3"/><circle cx="109" cy="890" r="2.4" fill="#777"/>
<path d="M131,884 v13 q9,5 18,0 v-13 z" fill="#5ea3df"/><ellipse cx="140" cy="884" rx="9" ry="3.2" fill="#8fc6f2"/><path d="M131,884 q9,4 18,0" fill="none" stroke="#4a8cc9" stroke-width=".6"/>
</svg>
<div class="t" style="left:145px;top:223px;font-size:14px;color:#222">Bodies</div>
<div class="t" style="left:168px;top:253px;font-size:14px;color:#222">lid (5)</div>
<div class="t" style="left:168px;top:283px;font-size:14px;color:#222">Body2</div>
<div class="t" style="left:168px;top:313px;font-size:14px;color:#222">Body8</div>
<div class="t" style="left:168px;top:343px;font-size:14px;color:#222">Body9</div>
<div class="t" style="left:168px;top:373px;font-size:14px;color:#222">Body10</div>
<div class="t" style="left:168px;top:403px;font-size:14px;color:#222">Body12</div>
<div class="t" style="left:168px;top:433px;font-size:14px;color:#222">Body13</div>
<div class="t" style="left:168px;top:463px;font-size:14px;color:#222">Body15</div>
<div class="t" style="left:168px;top:493px;font-size:14px;color:#222">Body17</div>
<div class="t" style="left:168px;top:523px;font-size:14px;color:#222">Body32</div>
<div class="t" style="left:168px;top:553px;font-size:14px;color:#222">Body40</div>
<div class="t" style="left:168px;top:583px;font-size:14px;color:#222">Body41</div>
<div class="t" style="left:168px;top:613px;font-size:14px;color:#222">Body42</div>
<div class="t" style="left:168px;top:643px;font-size:14px;color:#222">Body43</div>
<div class="t" style="left:168px;top:673px;font-size:14px;color:#222">Body44</div>
<div class="t" style="left:168px;top:703px;font-size:14px;color:#222">Body45</div>
<div class="t" style="left:168px;top:733px;font-size:14px;color:#222">Body48</div>
<div class="t" style="left:168px;top:763px;font-size:14px;color:#222">Body49</div>
<div class="t" style="left:168px;top:793px;font-size:14px;color:#222">Body52</div>
<div class="t" style="left:168px;top:823px;font-size:14px;color:#222">Body53</div>
<div class="t" style="left:168px;top:853px;font-size:14px;color:#222">Body54</div>
<div class="t" style="left:168px;top:883px;font-size:14px;color:#222">Body57</div>
<svg class="a" style="left:0;top:0" width="1920" height="1080" viewBox="0 0 1920 1080">
<defs>
<pattern id="cf" width="6" height="6" patternUnits="userSpaceOnUse" x="1" y="2"><rect width="6" height="6" fill="#2e2d2a"/><rect x="0" y="0" width="3" height="3" fill="#292825"/><rect x="3" y="3" width="3" height="3" fill="#33322e"/></pattern>
<linearGradient id="tabg" x1="0" y1="0" x2="0" y2="1"><stop offset="0" stop-color="#a08c5e"/><stop offset="1" stop-color="#6e5b2f"/></linearGradient>
<linearGradient id="legl" x1="0" y1="0" x2="1" y2="0"><stop offset="0" stop-color="#a8966a"/><stop offset="1" stop-color="#8a7440"/></linearGradient>
<linearGradient id="rod" x1="0" y1="0" x2="0" y2="1"><stop offset="0" stop-color="#8e8c86"/><stop offset=".4" stop-color="#c9c7c0"/><stop offset="1" stop-color="#b9b7b0"/></linearGradient>
<linearGradient id="shaft" x1="0" y1="0" x2="0" y2="1"><stop offset="0" stop-color="#6d6d6d"/><stop offset=".5" stop-color="#c8c8c8"/><stop offset="1" stop-color="#7a7a7a"/></linearGradient>
<radialGradient id="wheel" cx=".5" cy=".5" r=".6"><stop offset="0" stop-color="#1b1b1b"/><stop offset="1" stop-color="#070707"/></radialGradient>
</defs>
<g>
<path d="M656,385 L686,385 L686,958 L657,958 L657,720 L656.5,600 Z" fill="#846d35"/>
<path d="M656.5,386 Q661,400 663,428 L663,605 L658,705 L657,720 L656.5,600 Z" fill="url(#legl)"/>
<path d="M656,385 Q661,400 663.5,428 L663.5,605 L658.5,705 L657.5,760 L656.5,805 L657.5,845 L658.5,958" fill="none" stroke="#111" stroke-width="1.1"/>
<path d="M656,385.5 L686,385.5 M685.5,385 V958" fill="none" stroke="#111" stroke-width="1"/>
<line x1="663" y1="427.5" x2="686" y2="427.5" stroke="#111"/>
<path d="M658,560 q3,10 0,22 q-2,-10 0,-22" fill="none" stroke="#111" stroke-width="1"/>
<rect x="686" y="554.5" width="69" height="47.5" fill="#846d35" stroke="#111"/>
<rect x="686" y="586" width="69" height="16" fill="#7f6a38"/>
<line x1="656" y1="585.5" x2="755" y2="585.5" stroke="#111"/>
<line x1="686" y1="592.5" x2="755" y2="592.5" stroke="#111"/>
<rect x="696" y="317" width="32" height="108" fill="url(#wheel)" stroke="#000"/>
<rect x="728" y="326" width="20" height="91" fill="#1d1d1d" stroke="#000"/>
<rect x="728.5" y="329.0" width="19" height="1" fill="#050505"/>
<rect x="728.5" y="335.0" width="19" height="1" fill="#050505"/>
<rect x="728.5" y="342.0" width="19" height="1" fill="#3a3a3a"/>
<rect x="728.5" y="346.0" width="19" height="2" fill="#050505"/>
<rect x="728.5" y="354.0" width="19" height="1.5" fill="#050505"/>
<rect x="728.5" y="360.0" width="19" height="1" fill="#050505"/>
<rect x="728.5" y="364.0" width="19" height="1" fill="#050505"/>
<rect x="728.5" y="369.0" width="19" height="2" fill="#3a3a3a"/>
<rect x="728.5" y="373.0" width="19" height="3" fill="#050505"/>
<rect x="728.5" y="380.0" width="19" height="3" fill="#050505"/>
<rect x="728.5" y="384.0" width="19" height="3" fill="#3a3a3a"/>
<rect x="728.5" y="389.0" width="19" height="3" fill="#050505"/>
<rect x="728.5" y="397.0" width="19" height="1.5" fill="#3a3a3a"/>
<rect x="728.5" y="405.0" width="19" height="1.5" fill="#3a3a3a"/>
<rect x="728.5" y="412.0" width="19" height="1.5" fill="#3a3a3a"/>
<rect x="696" y="447" width="32" height="107" fill="url(#wheel)" stroke="#000"/>
<rect x="728" y="455" width="20" height="91" fill="#1d1d1d" stroke="#000"/>
<rect x="728.5" y="458.0" width="19" height="1" fill="#050505"/>
<rect x="728.5" y="466.0" width="19" height="1.5" fill="#3a3a3a"/>
<rect x="728.5" y="471.0" width="19" height="1.5" fill="#050505"/>
<rect x="728.5" y="478.0" width="19" height="1.5" fill="#050505"/>
<rect x="728.5" y="485.0" width="19" height="1.5" fill="#050505"/>
<rect x="728.5" y="489.0" width="19" height="3" fill="#3a3a3a"/>
<rect x="728.5" y="496.0" width="19" height="1" fill="#3a3a3a"/>
<rect x="728.5" y="502.0" width="19" height="2" fill="#050505"/>
<rect x="728.5" y="508.0" width="19" height="3" fill="#3a3a3a"/>
<rect x="728.5" y="514.0" width="19" height="1" fill="#050505"/>
<rect x="728.5" y="521.0" width="19" height="1.5" fill="#050505"/>
<rect x="728.5" y="529.0" width="19" height="1" fill="#050505"/>
<rect x="728.5" y="533.0" width="19" height="1" fill="#050505"/>
<rect x="728.5" y="540.0" width="19" height="1" fill="#050505"/>
<rect x="731" y="413" width="17" height="46" fill="#b9b9b3" stroke="#222"/>
<rect x="731" y="416" width="17" height="1.5" fill="#5a5a55"/>
<rect x="731" y="422" width="17" height="1.5" fill="#5a5a55"/>
<rect x="731" y="428" width="17" height="1.5" fill="#5a5a55"/>
<rect x="731" y="434" width="17" height="1.5" fill="#5a5a55"/>
<rect x="731" y="440" width="17" height="1.5" fill="#5a5a55"/>
<rect x="731" y="446" width="17" height="1.5" fill="#5a5a55"/>
<rect x="731" y="452" width="17" height="1.5" fill="#5a5a55"/>
<rect x="681" y="359" width="15" height="23" fill="#8f8f8a" stroke="#222"/><rect x="682" y="371.5" width="13" height="10" fill="#a9a9a2"/>
<line x1="681" y1="371" x2="696" y2="371" stroke="#333"/>
<rect x="679" y="363" width="3" height="15" fill="#aaa" stroke="#333" stroke-width=".7"/>
<rect x="748" y="363" width="7" height="15" fill="url(#shaft)"/>
<rect x="748" y="425" width="7" height="20" fill="#6e5c30"/>
<rect x="748" y="493" width="7" height="15" fill="#0c0c0c"/>
<rect x="694" y="494" width="2" height="14" fill="#111"/>
<path d="M755,351 L798,351 L798,368 L1010,368 L1010,586 L755,586 Z" fill="#846d35" stroke="#111"/>
<rect x="798" y="357" width="6" height="11" fill="url(#shaft)" stroke="#444" stroke-width=".6"/>
<path d="M755,586 L812,586 L812,634 L772,634 L755,617 Z" fill="#846d35"/>
<path d="M812,586 L812,634 L772,634 L755.5,617 L755.5,602" fill="none" stroke="#111"/>
<line x1="757" y1="616.5" x2="812" y2="616.5" stroke="#111"/>
<rect x="812" y="600" width="28" height="22" fill="url(#rod)"/>
</g>
<g transform="translate(2019,0) scale(-1,1)">
<path d="M656,385 L686,385 L686,958 L657,958 L657,720 L656.5,600 Z" fill="#846d35"/>
<path d="M656.5,386 Q661,400 663,428 L663,605 L658,705 L657,720 L656.5,600 Z" fill="url(#legl)"/>
<path d="M656,385 Q661,400 663.5,428 L663.5,605 L658.5,705 L657.5,760 L656.5,805 L657.5,845 L658.5,958" fill="none" stroke="#111" stroke-width="1.1"/>
<path d="M656,385.5 L686,385.5 M685.5,385 V958" fill="none" stroke="#111" stroke-width="1"/>
<line x1="663" y1="427.5" x2="686" y2="427.5" stroke="#111"/>
<path d="M658,560 q3,10 0,22 q-2,-10 0,-22" fill="none" stroke="#111" stroke-width="1"/>
<rect x="686" y="554.5" width="69" height="47.5" fill="#846d35" stroke="#111"/>
<rect x="686" y="586" width="69" height="16" fill="#7f6a38"/>
<line x1="656" y1="585.5" x2="755" y2="585.5" stroke="#111"/>
<line x1="686" y1="592.5" x2="755" y2="592.5" stroke="#111"/>
<rect x="696" y="317" width="32" height="108" fill="url(#wheel)" stroke="#000"/>
<rect x="728" y="326" width="20" height="91" fill="#1d1d1d" stroke="#000"/>
<rect x="728.5" y="329.0" width="19" height="1" fill="#050505"/>
<rect x="728.5" y="335.0" width="19" height="1" fill="#050505"/>
<rect x="728.5" y="342.0" width="19" height="1" fill="#3a3a3a"/>
<rect x="728.5" y="346.0" width="19" height="2" fill="#050505"/>
<rect x="728.5" y="354.0" width="19" height="1.5" fill="#050505"/>
<rect x="728.5" y="360.0" width="19" height="1" fill="#050505"/>
<rect x="728.5" y="364.0" width="19" height="1" fill="#050505"/>
<rect x="728.5" y="369.0" width="19" height="2" fill="#3a3a3a"/>
<rect x="728.5" y="373.0" width="19" height="3" fill="#050505"/>
<rect x="728.5" y="380.0" width="19" height="3" fill="#050505"/>
<rect x="728.5" y="384.0" width="19" height="3" fill="#3a3a3a"/>
<rect x="728.5" y="389.0" width="19" height="3" fill="#050505"/>
<rect x="728.5" y="397.0" width="19" height="1.5" fill="#3a3a3a"/>
<rect x="728.5" y="405.0" width="19" height="1.5" fill="#3a3a3a"/>
<rect x="728.5" y="412.0" width="19" height="1.5" fill="#3a3a3a"/>
<rect x="696" y="447" width="32" height="107" fill="url(#wheel)" stroke="#000"/>
<rect x="728" y="455" width="20" height="91" fill="#1d1d1d" stroke="#000"/>
<rect x="728.5" y="458.0" width="19" height="1" fill="#050505"/>
<rect x="728.5" y="466.0" width="19" height="1.5" fill="#3a3a3a"/>
<rect x="728.5" y="471.0" width="19" height="1.5" fill="#050505"/>
<rect x="728.5" y="478.0" width="19" height="1.5" fill="#050505"/>
<rect x="728.5" y="485.0" width="19" height="1.5" fill="#050505"/>
<rect x="728.5" y="489.0" width="19" height="3" fill="#3a3a3a"/>
<rect x="728.5" y="496.0" width="19" height="1" fill="#3a3a3a"/>
<rect x="728.5" y="502.0" width="19" height="2" fill="#050505"/>
<rect x="728.5" y="508.0" width="19" height="3" fill="#3a3a3a"/>
<rect x="728.5" y="514.0" width="19" height="1" fill="#050505"/>
<rect x="728.5" y="521.0" width="19" height="1.5" fill="#050505"/>
<rect x="728.5" y="529.0" width="19" height="1" fill="#050505"/>
<rect x="728.5" y="533.0" width="19" height="1" fill="#050505"/>
<rect x="728.5" y="540.0" width="19" height="1" fill="#050505"/>
<rect x="731" y="413" width="17" height="46" fill="#b9b9b3" stroke="#222"/>
<rect x="731" y="416" width="17" height="1.5" fill="#5a5a55"/>
<rect x="731" y="422" width="17" height="1.5" fill="#5a5a55"/>
<rect x="731" y="428" width="17" height="1.5" fill="#5a5a55"/>
<rect x="731" y="434" width="17" height="1.5" fill="#5a5a55"/>
<rect x="731" y="440" width="17" height="1.5" fill="#5a5a55"/>
<rect x="731" y="446" width="17" height="1.5" fill="#5a5a55"/>
<rect x="731" y="452" width="17" height="1.5" fill="#5a5a55"/>
<rect x="681" y="359" width="15" height="23" fill="#8f8f8a" stroke="#222"/><rect x="682" y="371.5" width="13" height="10" fill="#a9a9a2"/>
<line x1="681" y1="371" x2="696" y2="371" stroke="#333"/>
<rect x="679" y="363" width="3" height="15" fill="#aaa" stroke="#333" stroke-width=".7"/>
<rect x="748" y="363" width="7" height="15" fill="url(#shaft)"/>
<rect x="748" y="425" width="7" height="20" fill="#6e5c30"/>
<rect x="748" y="493" width="7" height="15" fill="#0c0c0c"/>
<rect x="694" y="494" width="2" height="14" fill="#111"/>
<path d="M755,351 L798,351 L798,368 L1010,368 L1010,586 L755,586 Z" fill="#846d35" stroke="#111"/>
<rect x="798" y="357" width="6" height="11" fill="url(#shaft)" stroke="#444" stroke-width=".6"/>
<path d="M755,586 L812,586 L812,634 L772,634 L755,617 Z" fill="#846d35"/>
<path d="M812,586 L812,634 L772,634 L755.5,617 L755.5,602" fill="none" stroke="#111"/>
<line x1="757" y1="616.5" x2="812" y2="616.5" stroke="#111"/>
<rect x="812" y="600" width="28" height="22" fill="url(#rod)"/>
</g>
<rect x="798" y="368.5" width="423" height="20" fill="#846d35"/>
<rect x="755.5" y="575" width="508" height="11" fill="#846d35"/>
<line x1="798" y1="368.5" x2="1221" y2="368.5" stroke="#111"/>
<rect x="879" y="365" width="261" height="3.5" fill="#151515"/><rect x="902" y="365" width="1" height="3" fill="#fff"/><rect x="1099" y="365" width="4" height="3" fill="#fff"/><rect x="1121" y="365" width="1" height="3" fill="#fff"/>
<rect x="988.5" y="320.5" width="40" height="45" fill="url(#tabg)" stroke="#111"/>
<rect x="1159.5" y="379.5" width="31" height="9" fill="#2f4c3d" stroke="#111"/>
<path d="M755.5,388.5 L982,388.5 Q995,387 1000,380 Q1009,372 1018,380 Q1023,387 1037,388.5 L1263.5,388.5 L1263.5,575.5 L755.5,575.5 Z" fill="url(#cf)" stroke="#000"/>
<path d="M758,410h1v1h-1zM758,428h1v1h-1zM758,440h1v1h-1zM758,452h1v1h-1zM758,458h1v1h-1zM758,518h1v1h-1zM758,542h1v1h-1zM764,404h1v1h-1zM764,410h1v1h-1zM764,512h1v1h-1zM764,542h1v1h-1zM770,440h1v1h-1zM770,488h1v1h-1zM770,506h1v1h-1zM770,512h1v1h-1zM770,548h1v1h-1zM776,470h1v1h-1zM776,524h1v1h-1zM776,566h1v1h-1zM782,392h1v1h-1zM782,398h1v1h-1zM782,422h1v1h-1zM782,428h1v1h-1zM782,440h1v1h-1zM782,452h1v1h-1zM782,524h1v1h-1zM782,530h1v1h-1zM782,560h1v1h-1zM788,404h1v1h-1zM788,536h1v1h-1zM788,542h1v1h-1zM794,476h1v1h-1zM800,452h1v1h-1zM806,422h1v1h-1zM806,440h1v1h-1zM806,500h1v1h-1zM812,482h1v1h-1zM812,494h1v1h-1zM818,446h1v1h-1zM818,464h1v1h-1zM818,488h1v1h-1zM818,512h1v1h-1zM818,524h1v1h-1zM824,410h1v1h-1zM824,416h1v1h-1zM824,434h1v1h-1zM824,458h1v1h-1zM824,470h1v1h-1zM824,530h1v1h-1zM824,542h1v1h-1zM830,410h1v1h-1zM830,422h1v1h-1zM830,458h1v1h-1zM830,548h1v1h-1zM830,560h1v1h-1zM836,398h1v1h-1zM836,506h1v1h-1zM836,542h1v1h-1zM836,554h1v1h-1zM836,566h1v1h-1zM836,572h1v1h-1zM842,476h1v1h-1zM848,392h1v1h-1zM848,410h1v1h-1zM848,452h1v1h-1zM848,488h1v1h-1zM848,506h1v1h-1zM854,398h1v1h-1zM854,434h1v1h-1zM854,440h1v1h-1zM854,494h1v1h-1zM854,524h1v1h-1zM860,464h1v1h-1zM860,470h1v1h-1zM860,518h1v1h-1zM866,422h1v1h-1zM866,428h1v1h-1zM866,530h1v1h-1zM866,566h1v1h-1zM872,524h1v1h-1zM872,536h1v1h-1zM878,416h1v1h-1zM878,506h1v1h-1zM878,512h1v1h-1zM878,542h1v1h-1zM884,398h1v1h-1zM884,458h1v1h-1zM884,518h1v1h-1zM884,524h1v1h-1zM884,560h1v1h-1zM890,446h1v1h-1zM890,494h1v1h-1zM896,476h1v1h-1zM896,482h1v1h-1zM896,548h1v1h-1zM902,398h1v1h-1zM902,464h1v1h-1zM902,506h1v1h-1zM902,530h1v1h-1zM902,536h1v1h-1zM902,542h1v1h-1zM908,434h1v1h-1zM908,464h1v1h-1zM914,398h1v1h-1zM914,422h1v1h-1zM914,428h1v1h-1zM914,470h1v1h-1zM914,476h1v1h-1zM920,476h1v1h-1zM920,506h1v1h-1zM920,518h1v1h-1zM926,398h1v1h-1zM926,464h1v1h-1zM926,512h1v1h-1zM926,518h1v1h-1zM926,542h1v1h-1zM932,458h1v1h-1zM932,506h1v1h-1zM932,530h1v1h-1zM938,392h1v1h-1zM938,446h1v1h-1zM938,572h1v1h-1zM944,404h1v1h-1zM944,416h1v1h-1zM944,482h1v1h-1zM944,536h1v1h-1zM944,554h1v1h-1zM944,572h1v1h-1zM950,398h1v1h-1zM950,422h1v1h-1zM950,524h1v1h-1zM956,422h1v1h-1zM956,470h1v1h-1zM956,518h1v1h-1zM962,410h1v1h-1zM962,458h1v1h-1zM962,464h1v1h-1zM962,518h1v1h-1zM962,524h1v1h-1zM962,536h1v1h-1zM968,422h1v1h-1zM968,458h1v1h-1zM968,518h1v1h-1zM968,542h1v1h-1zM968,554h1v1h-1zM974,440h1v1h-1zM974,464h1v1h-1zM974,506h1v1h-1zM974,518h1v1h-1zM980,428h1v1h-1zM986,392h1v1h-1zM986,410h1v1h-1zM986,416h1v1h-1zM986,440h1v1h-1zM986,446h1v1h-1zM986,476h1v1h-1zM986,512h1v1h-1zM986,536h1v1h-1zM986,548h1v1h-1zM986,554h1v1h-1zM992,410h1v1h-1zM992,416h1v1h-1zM992,446h1v1h-1zM992,506h1v1h-1zM992,560h1v1h-1zM998,392h1v1h-1zM998,416h1v1h-1zM998,500h1v1h-1zM998,512h1v1h-1zM998,566h1v1h-1zM1004,392h1v1h-1zM1010,452h1v1h-1zM1010,464h1v1h-1zM1010,512h1v1h-1zM1010,530h1v1h-1zM1016,506h1v1h-1zM1022,428h1v1h-1zM1022,464h1v1h-1zM1022,566h1v1h-1zM1028,398h1v1h-1zM1034,440h1v1h-1zM1034,512h1v1h-1zM1034,554h1v1h-1zM1034,560h1v1h-1zM1040,398h1v1h-1zM1040,560h1v1h-1zM1046,416h1v1h-1zM1046,470h1v1h-1zM1046,488h1v1h-1zM1046,542h1v1h-1zM1052,530h1v1h-1zM1052,554h1v1h-1zM1052,566h1v1h-1zM1058,482h1v1h-1zM1058,494h1v1h-1zM1064,398h1v1h-1zM1064,410h1v1h-1zM1064,416h1v1h-1zM1064,446h1v1h-1zM1064,488h1v1h-1zM1064,512h1v1h-1zM1064,518h1v1h-1zM1064,542h1v1h-1zM1064,560h1v1h-1zM1070,404h1v1h-1zM1070,434h1v1h-1zM1070,482h1v1h-1zM1070,488h1v1h-1zM1070,506h1v1h-1zM1070,542h1v1h-1zM1076,458h1v1h-1zM1076,566h1v1h-1zM1082,416h1v1h-1zM1082,482h1v1h-1zM1082,572h1v1h-1zM1088,500h1v1h-1zM1088,518h1v1h-1zM1088,560h1v1h-1zM1088,566h1v1h-1zM1094,458h1v1h-1zM1094,476h1v1h-1zM1094,482h1v1h-1zM1094,518h1v1h-1zM1094,536h1v1h-1zM1100,428h1v1h-1zM1100,464h1v1h-1zM1100,494h1v1h-1zM1100,542h1v1h-1zM1106,410h1v1h-1zM1106,428h1v1h-1zM1106,476h1v1h-1zM1106,542h1v1h-1zM1112,446h1v1h-1zM1112,458h1v1h-1zM1112,530h1v1h-1zM1112,548h1v1h-1zM1112,572h1v1h-1zM1118,410h1v1h-1zM1118,488h1v1h-1zM1118,494h1v1h-1zM1118,554h1v1h-1zM1124,392h1v1h-1zM1124,428h1v1h-1zM1124,494h1v1h-1zM1124,566h1v1h-1zM1130,422h1v1h-1zM1130,446h1v1h-1zM1130,464h1v1h-1zM1130,470h1v1h-1zM1130,488h1v1h-1zM1130,518h1v1h-1zM1130,536h1v1h-1zM1136,542h1v1h-1zM1142,410h1v1h-1zM1142,428h1v1h-1zM1142,482h1v1h-1zM1148,470h1v1h-1zM1154,392h1v1h-1zM1154,458h1v1h-1zM1154,476h1v1h-1zM1154,500h1v1h-1zM1160,440h1v1h-1zM1166,422h1v1h-1zM1166,476h1v1h-1zM1166,482h1v1h-1zM1172,398h1v1h-1zM1172,512h1v1h-1zM1178,434h1v1h-1zM1178,464h1v1h-1zM1178,566h1v1h-1zM1178,572h1v1h-1zM1184,422h1v1h-1zM1184,428h1v1h-1zM1184,470h1v1h-1zM1184,506h1v1h-1zM1184,548h1v1h-1zM1190,518h1v1h-1zM1190,542h1v1h-1zM1196,404h1v1h-1zM1196,434h1v1h-1zM1202,470h1v1h-1zM1202,500h1v1h-1zM1202,530h1v1h-1zM1208,422h1v1h-1zM1208,494h1v1h-1zM1208,518h1v1h-1zM1208,524h1v1h-1zM1208,554h1v1h-1zM1214,434h1v1h-1zM1214,458h1v1h-1zM1214,476h1v1h-1zM1214,488h1v1h-1zM1214,518h1v1h-1zM1214,554h1v1h-1zM1220,422h1v1h-1zM1220,464h1v1h-1zM1220,518h1v1h-1zM1226,500h1v1h-1zM1226,524h1v1h-1zM1226,554h1v1h-1zM1232,398h1v1h-1zM1232,404h1v1h-1zM1232,422h1v1h-1zM1232,446h1v1h-1zM1232,476h1v1h-1zM1232,530h1v1h-1zM1238,470h1v1h-1zM1238,542h1v1h-1zM1238,572h1v1h-1zM1244,392h1v1h-1zM1244,416h1v1h-1zM1244,536h1v1h-1zM1250,410h1v1h-1zM1250,476h1v1h-1zM1250,500h1v1h-1zM1250,548h1v1h-1zM1250,572h1v1h-1zM1256,404h1v1h-1zM1256,446h1v1h-1zM1256,464h1v1h-1zM1256,476h1v1h-1zM1256,512h1v1h-1zM1256,530h1v1h-1zM1075,444h1v1h-1zM1078,444h1v1h-1zM1084,444h1v1h-1zM1097,444h1v1h-1zM1105,444h1v1h-1zM1118,444h1v1h-1zM1122,444h1v1h-1zM1132,444h1v1h-1zM1137,444h1v1h-1zM1141,444h1v1h-1zM1146,444h1v1h-1zM1151,444h1v1h-1zM1155,444h1v1h-1zM1159,444h1v1h-1zM1164,444h1v1h-1zM1167,444h1v1h-1zM1173,444h1v1h-1zM1182,444h1v1h-1zM1185,444h1v1h-1zM1189,444h1v1h-1zM1201,444h1v1h-1zM1204,444h1v1h-1zM1211,444h1v1h-1zM1221,444h1v1h-1zM1234,444h1v1h-1zM1239,444h1v1h-1zM1243,444h1v1h-1zM1246,444h1v1h-1zM1249,444h1v1h-1zM1252,444h1v1h-1zM1260,444h1v1h-1zM884,450h1v1h-1zM889,450h1v1h-1zM892,450h1v1h-1zM901,450h1v1h-1zM907,450h1v1h-1zM911,450h1v1h-1zM915,450h1v1h-1zM920,450h1v1h-1zM938,450h1v1h-1zM964,450h1v1h-1zM973,450h1v1h-1zM981,450h1v1h-1zM988,450h1v1h-1zM991,450h1v1h-1zM880,456h1v1h-1zM884,456h1v1h-1zM893,456h1v1h-1zM910,456h1v1h-1zM913,456h1v1h-1zM916,456h1v1h-1zM920,456h1v1h-1zM924,456h1v1h-1zM929,456h1v1h-1zM945,456h1v1h-1zM954,456h1v1h-1zM958,456h1v1h-1zM963,456h1v1h-1zM971,456h1v1h-1zM979,456h1v1h-1zM987,456h1v1h-1zM990,456h1v1h-1zM994,456h1v1h-1zM1000,456h1v1h-1zM1015,456h1v1h-1zM1031,456h1v1h-1zM1047,456h1v1h-1zM1056,456h1v1h-1zM1059,456h1v1h-1zM1062,456h1v1h-1zM1065,456h1v1h-1zM1069,456h1v1h-1zM1079,456h1v1h-1zM1084,456h1v1h-1zM1100,456h1v1h-1zM1109,456h1v1h-1zM1113,456h1v1h-1zM1117,456h1v1h-1zM1120,456h1v1h-1zM1127,456h1v1h-1zM1132,456h1v1h-1zM1140,456h1v1h-1zM1143,456h1v1h-1zM1146,456h1v1h-1zM1149,456h1v1h-1zM1154,456h1v1h-1zM1165,456h1v1h-1zM1172,456h1v1h-1zM1176,456h1v1h-1zM1184,456h1v1h-1zM1191,456h1v1h-1zM1196,456h1v1h-1zM1100,510h1v1h-1zM1104,510h1v1h-1zM1116,510h1v1h-1zM1123,510h1v1h-1zM1126,510h1v1h-1zM1138,510h1v1h-1zM1158,510h1v1h-1zM1161,510h1v1h-1zM1164,510h1v1h-1zM1173,510h1v1h-1zM1184,510h1v1h-1zM1188,510h1v1h-1zM1198,510h1v1h-1zM1201,510h1v1h-1zM1205,510h1v1h-1zM1210,510h1v1h-1zM1213,510h1v1h-1zM1217,510h1v1h-1zM1233,510h1v1h-1zM1241,510h1v1h-1zM1244,510h1v1h-1zM1247,510h1v1h-1zM1252,510h1v1h-1zM1255,510h1v1h-1zM1259,510h1v1h-1zM761,521h1v1h-1zM770,521h1v1h-1zM773,521h1v1h-1zM778,521h1v1h-1zM783,521h1v1h-1zM786,521h1v1h-1zM793,521h1v1h-1zM806,521h1v1h-1zM812,521h1v1h-1zM820,521h1v1h-1zM829,521h1v1h-1zM833,521h1v1h-1zM838,521h1v1h-1zM847,521h1v1h-1zM852,521h1v1h-1zM855,521h1v1h-1zM867,521h1v1h-1zM872,521h1v1h-1zM881,521h1v1h-1zM889,521h1v1h-1zM899,521h1v1h-1zM904,521h1v1h-1zM921,521h1v1h-1zM931,521h1v1h-1zM986,521h1v1h-1zM990,521h1v1h-1zM993,521h1v1h-1zM998,521h1v1h-1zM1001,521h1v1h-1zM1005,521h1v1h-1zM1008,521h1v1h-1zM1013,521h1v1h-1zM1026,521h1v1h-1zM1034,521h1v1h-1zM1041,521h1v1h-1zM980,528h1v1h-1zM988,528h1v1h-1zM1006,528h1v1h-1zM1011,528h1v1h-1zM1015,528h1v1h-1zM1023,528h1v1h-1zM1027,528h1v1h-1zM1032,528h1v1h-1zM1037,528h1v1h-1zM1042,528h1v1h-1zM1047,528h1v1h-1zM1051,528h1v1h-1zM1058,528h1v1h-1zM1065,528h1v1h-1zM1078,528h1v1h-1zM1082,528h1v1h-1zM1094,528h1v1h-1zM1109,528h1v1h-1zM1123,528h1v1h-1zM1127,528h1v1h-1zM1135,528h1v1h-1zM1140,528h1v1h-1zM1148,528h1v1h-1zM1152,528h1v1h-1zM1155,528h1v1h-1zM1159,528h1v1h-1zM1167,528h1v1h-1zM1172,528h1v1h-1zM1177,528h1v1h-1zM1185,528h1v1h-1zM1196,528h1v1h-1zM1199,528h1v1h-1zM1227,528h1v1h-1zM1230,528h1v1h-1zM1233,528h1v1h-1zM1238,528h1v1h-1zM1242,528h1v1h-1zM1246,528h1v1h-1zM1250,528h1v1h-1zM1260,528h1v1h-1zM800,567h1v1h-1zM809,567h1v1h-1zM812,567h1v1h-1zM815,567h1v1h-1zM824,567h1v1h-1zM829,567h1v1h-1zM833,567h1v1h-1zM838,567h1v1h-1zM844,567h1v1h-1zM852,567h1v1h-1zM859,567h1v1h-1zM875,567h1v1h-1zM878,567h1v1h-1zM885,567h1v1h-1zM892,567h1v1h-1zM897,567h1v1h-1zM900,567h1v1h-1zM910,567h1v1h-1zM913,567h1v1h-1zM916,567h1v1h-1zM921,567h1v1h-1zM924,567h1v1h-1zM930,567h1v1h-1zM945,567h1v1h-1zM951,567h1v1h-1zM955,567h1v1h-1zM967,567h1v1h-1zM971,567h1v1h-1zM974,567h1v1h-1zM987,567h1v1h-1zM992,567h1v1h-1zM997,567h1v1h-1zM1000,567h1v1h-1zM1007,567h1v1h-1zM1011,567h1v1h-1zM1015,567h1v1h-1zM1023,567h1v1h-1zM1027,567h1v1h-1zM1037,567h1v1h-1zM1046,567h1v1h-1zM1049,567h1v1h-1zM1053,567h1v1h-1zM1056,567h1v1h-1zM1060,567h1v1h-1zM1065,567h1v1h-1zM1068,567h1v1h-1zM1074,567h1v1h-1zM1078,567h1v1h-1zM1081,567h1v1h-1zM1085,567h1v1h-1zM1094,567h1v1h-1zM1105,567h1v1h-1zM1108,567h1v1h-1zM1113,567h1v1h-1zM1120,567h1v1h-1zM1124,567h1v1h-1zM1132,567h1v1h-1zM1141,567h1v1h-1zM1150,567h1v1h-1zM1154,567h1v1h-1zM1157,567h1v1h-1zM1161,567h1v1h-1zM1166,567h1v1h-1zM1170,567h1v1h-1zM1175,567h1v1h-1zM1180,567h1v1h-1zM1183,567h1v1h-1zM1188,567h1v1h-1zM1201,567h1v1h-1zM1204,567h1v1h-1zM1207,567h1v1h-1zM1212,567h1v1h-1zM1226,567h1v1h-1zM1231,567h1v1h-1zM1235,567h1v1h-1zM1238,567h1v1h-1zM1243,567h1v1h-1zM1246,567h1v1h-1zM1257,567h1v1h-1zM1260,567h1v1h-1zM890,401h1v1h-1zM890,411h1v1h-1zM890,420h1v1h-1zM890,424h1v1h-1zM890,428h1v1h-1zM890,437h1v1h-1zM890,450h1v1h-1zM890,458h1v1h-1zM890,467h1v1h-1zM890,484h1v1h-1zM890,499h1v1h-1zM890,507h1v1h-1zM890,516h1v1h-1zM890,531h1v1h-1zM890,566h1v1h-1zM1090,392h1v1h-1zM1090,397h1v1h-1zM1090,405h1v1h-1zM1090,416h1v1h-1zM1090,421h1v1h-1zM1090,427h1v1h-1zM1090,431h1v1h-1zM1090,434h1v1h-1zM1090,438h1v1h-1zM1090,448h1v1h-1zM1090,459h1v1h-1zM1090,472h1v1h-1zM1090,475h1v1h-1zM1090,479h1v1h-1zM1090,483h1v1h-1zM1090,497h1v1h-1zM1090,510h1v1h-1zM1090,515h1v1h-1zM1090,530h1v1h-1zM1090,533h1v1h-1zM1090,542h1v1h-1zM1090,552h1v1h-1zM1090,557h1v1h-1zM1090,565h1v1h-1zM818,396h1v1h-1zM818,399h1v1h-1zM818,411h1v1h-1zM818,421h1v1h-1zM818,439h1v1h-1zM818,461h1v1h-1zM818,467h1v1h-1zM818,478h1v1h-1zM818,483h1v1h-1zM818,488h1v1h-1zM818,494h1v1h-1zM818,515h1v1h-1zM818,537h1v1h-1zM818,551h1v1h-1zM818,554h1v1h-1zM818,559h1v1h-1zM818,564h1v1h-1zM1008,421h1v1h-1zM1008,447h1v1h-1zM1008,458h1v1h-1zM1008,471h1v1h-1zM1008,480h1v1h-1zM1008,519h1v1h-1zM1008,527h1v1h-1zM1008,530h1v1h-1zM1008,535h1v1h-1zM1008,545h1v1h-1zM1008,551h1v1h-1zM1008,557h1v1h-1zM1008,561h1v1h-1zM1008,570h1v1h-1z" fill="#e6e6e6"/>
<path d="M758,392h1v1h-1zM758,398h1v1h-1zM758,476h1v1h-1zM758,482h1v1h-1zM758,530h1v1h-1zM758,536h1v1h-1zM758,548h1v1h-1zM758,560h1v1h-1zM764,416h1v1h-1zM764,434h1v1h-1zM764,452h1v1h-1zM764,470h1v1h-1zM764,500h1v1h-1zM764,530h1v1h-1zM764,572h1v1h-1zM770,470h1v1h-1zM770,500h1v1h-1zM770,524h1v1h-1zM770,530h1v1h-1zM776,398h1v1h-1zM776,428h1v1h-1zM776,434h1v1h-1zM776,440h1v1h-1zM776,446h1v1h-1zM776,464h1v1h-1zM782,404h1v1h-1zM782,410h1v1h-1zM782,434h1v1h-1zM782,470h1v1h-1zM782,476h1v1h-1zM782,494h1v1h-1zM782,542h1v1h-1zM782,554h1v1h-1zM788,392h1v1h-1zM788,434h1v1h-1zM788,446h1v1h-1zM788,470h1v1h-1zM788,476h1v1h-1zM788,518h1v1h-1zM788,548h1v1h-1zM788,554h1v1h-1zM794,416h1v1h-1zM794,422h1v1h-1zM794,428h1v1h-1zM794,434h1v1h-1zM794,512h1v1h-1zM794,524h1v1h-1zM794,566h1v1h-1zM794,572h1v1h-1zM800,392h1v1h-1zM800,410h1v1h-1zM800,446h1v1h-1zM800,500h1v1h-1zM800,506h1v1h-1zM800,512h1v1h-1zM800,518h1v1h-1zM800,530h1v1h-1zM800,542h1v1h-1zM806,434h1v1h-1zM806,452h1v1h-1zM806,476h1v1h-1zM806,512h1v1h-1zM806,518h1v1h-1zM812,440h1v1h-1zM812,464h1v1h-1zM812,470h1v1h-1zM812,488h1v1h-1zM812,518h1v1h-1zM812,536h1v1h-1zM812,554h1v1h-1zM818,404h1v1h-1zM818,422h1v1h-1zM818,428h1v1h-1zM818,434h1v1h-1zM818,470h1v1h-1zM818,518h1v1h-1zM818,536h1v1h-1zM818,542h1v1h-1zM818,566h1v1h-1zM818,572h1v1h-1zM824,488h1v1h-1zM824,506h1v1h-1zM824,512h1v1h-1zM824,524h1v1h-1zM824,536h1v1h-1zM824,548h1v1h-1zM824,554h1v1h-1zM824,560h1v1h-1zM824,572h1v1h-1zM830,398h1v1h-1zM830,416h1v1h-1zM830,440h1v1h-1zM830,554h1v1h-1zM830,572h1v1h-1zM836,392h1v1h-1zM836,422h1v1h-1zM836,428h1v1h-1zM836,434h1v1h-1zM836,446h1v1h-1zM836,458h1v1h-1zM836,482h1v1h-1zM836,494h1v1h-1zM836,530h1v1h-1zM836,548h1v1h-1zM842,392h1v1h-1zM842,398h1v1h-1zM842,446h1v1h-1zM842,458h1v1h-1zM842,512h1v1h-1zM842,572h1v1h-1zM848,398h1v1h-1zM848,500h1v1h-1zM848,512h1v1h-1zM848,524h1v1h-1zM854,404h1v1h-1zM854,410h1v1h-1zM854,422h1v1h-1zM854,446h1v1h-1zM854,470h1v1h-1zM854,506h1v1h-1zM854,554h1v1h-1zM854,560h1v1h-1zM854,572h1v1h-1zM860,398h1v1h-1zM860,416h1v1h-1zM860,446h1v1h-1zM860,488h1v1h-1zM860,494h1v1h-1zM860,506h1v1h-1zM860,536h1v1h-1zM860,560h1v1h-1zM866,416h1v1h-1zM866,440h1v1h-1zM866,452h1v1h-1zM866,458h1v1h-1zM866,470h1v1h-1zM866,560h1v1h-1zM872,392h1v1h-1zM872,410h1v1h-1zM872,428h1v1h-1zM872,440h1v1h-1zM872,458h1v1h-1zM872,464h1v1h-1zM872,470h1v1h-1zM872,488h1v1h-1zM872,512h1v1h-1zM872,518h1v1h-1zM872,542h1v1h-1zM872,548h1v1h-1zM878,410h1v1h-1zM878,422h1v1h-1zM878,434h1v1h-1zM878,458h1v1h-1zM878,464h1v1h-1zM878,470h1v1h-1zM884,392h1v1h-1zM884,404h1v1h-1zM884,470h1v1h-1zM884,488h1v1h-1zM884,494h1v1h-1zM884,500h1v1h-1zM884,548h1v1h-1zM884,566h1v1h-1zM890,416h1v1h-1zM890,422h1v1h-1zM890,440h1v1h-1zM890,470h1v1h-1zM890,488h1v1h-1zM890,500h1v1h-1zM890,518h1v1h-1zM890,542h1v1h-1zM890,554h1v1h-1zM890,566h1v1h-1zM890,572h1v1h-1zM896,398h1v1h-1zM896,416h1v1h-1zM896,422h1v1h-1zM896,446h1v1h-1zM896,458h1v1h-1zM896,470h1v1h-1zM896,524h1v1h-1zM896,530h1v1h-1zM896,572h1v1h-1zM902,392h1v1h-1zM902,404h1v1h-1zM902,422h1v1h-1zM902,434h1v1h-1zM902,488h1v1h-1zM902,554h1v1h-1zM902,572h1v1h-1zM908,392h1v1h-1zM908,410h1v1h-1zM908,422h1v1h-1zM908,428h1v1h-1zM908,470h1v1h-1zM908,500h1v1h-1zM908,524h1v1h-1zM908,560h1v1h-1zM908,566h1v1h-1zM914,404h1v1h-1zM914,416h1v1h-1zM914,440h1v1h-1zM914,464h1v1h-1zM914,500h1v1h-1zM914,542h1v1h-1zM914,554h1v1h-1zM920,392h1v1h-1zM920,398h1v1h-1zM920,404h1v1h-1zM920,410h1v1h-1zM920,428h1v1h-1zM920,452h1v1h-1zM920,512h1v1h-1zM920,524h1v1h-1zM920,566h1v1h-1zM926,416h1v1h-1zM926,428h1v1h-1zM926,434h1v1h-1zM926,440h1v1h-1zM926,458h1v1h-1zM926,470h1v1h-1zM926,482h1v1h-1zM926,488h1v1h-1zM926,494h1v1h-1zM926,548h1v1h-1zM926,566h1v1h-1zM926,572h1v1h-1zM932,398h1v1h-1zM932,440h1v1h-1zM932,452h1v1h-1zM932,500h1v1h-1zM932,554h1v1h-1zM932,560h1v1h-1zM938,416h1v1h-1zM938,422h1v1h-1zM938,482h1v1h-1zM938,494h1v1h-1zM938,518h1v1h-1zM938,524h1v1h-1zM938,548h1v1h-1zM938,554h1v1h-1zM944,440h1v1h-1zM944,500h1v1h-1zM944,524h1v1h-1zM944,542h1v1h-1zM950,446h1v1h-1zM950,476h1v1h-1zM950,506h1v1h-1zM950,542h1v1h-1zM950,554h1v1h-1zM950,566h1v1h-1zM956,398h1v1h-1zM956,404h1v1h-1zM956,416h1v1h-1zM956,428h1v1h-1zM956,434h1v1h-1zM956,458h1v1h-1zM956,548h1v1h-1zM962,398h1v1h-1zM962,422h1v1h-1zM962,452h1v1h-1zM962,470h1v1h-1zM962,500h1v1h-1zM962,506h1v1h-1zM962,548h1v1h-1zM962,566h1v1h-1zM968,398h1v1h-1zM968,410h1v1h-1zM968,416h1v1h-1zM968,452h1v1h-1zM968,506h1v1h-1zM968,536h1v1h-1zM968,572h1v1h-1zM974,392h1v1h-1zM974,422h1v1h-1zM974,428h1v1h-1zM974,434h1v1h-1zM974,500h1v1h-1zM974,512h1v1h-1zM974,524h1v1h-1zM974,554h1v1h-1zM980,398h1v1h-1zM980,416h1v1h-1zM980,434h1v1h-1zM980,440h1v1h-1zM980,464h1v1h-1zM980,476h1v1h-1zM980,482h1v1h-1zM980,560h1v1h-1zM980,566h1v1h-1zM986,404h1v1h-1zM986,434h1v1h-1zM986,542h1v1h-1zM992,404h1v1h-1zM992,428h1v1h-1zM992,434h1v1h-1zM992,452h1v1h-1zM992,458h1v1h-1zM992,476h1v1h-1zM992,548h1v1h-1zM992,572h1v1h-1zM998,398h1v1h-1zM998,440h1v1h-1zM998,464h1v1h-1zM998,476h1v1h-1zM998,482h1v1h-1zM1004,398h1v1h-1zM1004,404h1v1h-1zM1004,434h1v1h-1zM1004,476h1v1h-1zM1004,482h1v1h-1zM1004,506h1v1h-1zM1004,530h1v1h-1zM1004,548h1v1h-1zM1004,554h1v1h-1zM1004,560h1v1h-1zM1010,392h1v1h-1zM1010,398h1v1h-1zM1010,404h1v1h-1zM1010,410h1v1h-1zM1010,422h1v1h-1zM1010,428h1v1h-1zM1010,434h1v1h-1zM1010,500h1v1h-1zM1010,518h1v1h-1zM1010,572h1v1h-1zM1016,440h1v1h-1zM1016,494h1v1h-1zM1016,536h1v1h-1zM1022,392h1v1h-1zM1022,440h1v1h-1zM1022,524h1v1h-1zM1022,548h1v1h-1zM1022,572h1v1h-1zM1028,428h1v1h-1zM1028,434h1v1h-1zM1028,458h1v1h-1zM1028,476h1v1h-1zM1028,482h1v1h-1zM1028,518h1v1h-1zM1028,560h1v1h-1zM1028,572h1v1h-1zM1034,410h1v1h-1zM1034,422h1v1h-1zM1034,434h1v1h-1zM1034,452h1v1h-1zM1034,458h1v1h-1zM1034,464h1v1h-1zM1034,536h1v1h-1zM1040,392h1v1h-1zM1040,404h1v1h-1zM1040,410h1v1h-1zM1040,428h1v1h-1zM1040,446h1v1h-1zM1040,494h1v1h-1zM1040,536h1v1h-1zM1040,542h1v1h-1zM1040,548h1v1h-1zM1040,572h1v1h-1zM1046,512h1v1h-1zM1046,560h1v1h-1zM1052,410h1v1h-1zM1052,440h1v1h-1zM1052,464h1v1h-1zM1052,494h1v1h-1zM1052,500h1v1h-1zM1052,506h1v1h-1zM1052,560h1v1h-1zM1052,572h1v1h-1zM1058,458h1v1h-1zM1058,488h1v1h-1zM1058,542h1v1h-1zM1058,548h1v1h-1zM1058,560h1v1h-1zM1064,500h1v1h-1zM1064,506h1v1h-1zM1064,530h1v1h-1zM1064,554h1v1h-1zM1064,572h1v1h-1zM1070,398h1v1h-1zM1070,464h1v1h-1zM1070,512h1v1h-1zM1070,524h1v1h-1zM1070,572h1v1h-1zM1076,452h1v1h-1zM1076,482h1v1h-1zM1076,512h1v1h-1zM1076,560h1v1h-1zM1076,572h1v1h-1zM1082,446h1v1h-1zM1082,500h1v1h-1zM1082,518h1v1h-1zM1082,542h1v1h-1zM1082,548h1v1h-1zM1088,404h1v1h-1zM1088,446h1v1h-1zM1088,452h1v1h-1zM1088,458h1v1h-1zM1088,494h1v1h-1zM1088,536h1v1h-1zM1094,410h1v1h-1zM1094,452h1v1h-1zM1094,464h1v1h-1zM1094,470h1v1h-1zM1094,548h1v1h-1zM1100,404h1v1h-1zM1100,422h1v1h-1zM1100,434h1v1h-1zM1100,500h1v1h-1zM1100,524h1v1h-1zM1100,548h1v1h-1zM1100,554h1v1h-1zM1100,560h1v1h-1zM1100,572h1v1h-1zM1106,392h1v1h-1zM1106,398h1v1h-1zM1106,422h1v1h-1zM1106,440h1v1h-1zM1106,464h1v1h-1zM1106,506h1v1h-1zM1106,530h1v1h-1zM1106,536h1v1h-1zM1106,560h1v1h-1zM1106,572h1v1h-1zM1112,398h1v1h-1zM1112,404h1v1h-1zM1112,416h1v1h-1zM1112,422h1v1h-1zM1112,434h1v1h-1zM1112,476h1v1h-1zM1112,488h1v1h-1zM1112,494h1v1h-1zM1112,500h1v1h-1zM1112,536h1v1h-1zM1112,560h1v1h-1zM1118,404h1v1h-1zM1118,428h1v1h-1zM1118,446h1v1h-1zM1118,458h1v1h-1zM1118,464h1v1h-1zM1118,482h1v1h-1zM1118,512h1v1h-1zM1118,518h1v1h-1zM1118,548h1v1h-1zM1124,404h1v1h-1zM1124,452h1v1h-1zM1124,458h1v1h-1zM1124,476h1v1h-1zM1124,518h1v1h-1zM1124,542h1v1h-1zM1130,434h1v1h-1zM1130,440h1v1h-1zM1130,452h1v1h-1zM1130,482h1v1h-1zM1130,542h1v1h-1zM1130,560h1v1h-1zM1130,566h1v1h-1zM1136,392h1v1h-1zM1136,410h1v1h-1zM1136,428h1v1h-1zM1136,488h1v1h-1zM1136,494h1v1h-1zM1136,500h1v1h-1zM1136,566h1v1h-1zM1142,434h1v1h-1zM1142,494h1v1h-1zM1142,506h1v1h-1zM1142,530h1v1h-1zM1142,554h1v1h-1zM1142,560h1v1h-1zM1142,572h1v1h-1zM1148,410h1v1h-1zM1148,428h1v1h-1zM1148,434h1v1h-1zM1148,440h1v1h-1zM1148,446h1v1h-1zM1148,458h1v1h-1zM1148,464h1v1h-1zM1148,506h1v1h-1zM1148,542h1v1h-1zM1148,548h1v1h-1zM1148,554h1v1h-1zM1154,410h1v1h-1zM1154,428h1v1h-1zM1154,440h1v1h-1zM1154,452h1v1h-1zM1154,506h1v1h-1zM1154,524h1v1h-1zM1154,530h1v1h-1zM1160,428h1v1h-1zM1160,524h1v1h-1zM1160,548h1v1h-1zM1166,392h1v1h-1zM1166,398h1v1h-1zM1166,404h1v1h-1zM1166,434h1v1h-1zM1166,458h1v1h-1zM1172,482h1v1h-1zM1172,488h1v1h-1zM1172,554h1v1h-1zM1172,560h1v1h-1zM1178,392h1v1h-1zM1178,398h1v1h-1zM1178,452h1v1h-1zM1178,470h1v1h-1zM1178,494h1v1h-1zM1178,512h1v1h-1zM1178,548h1v1h-1zM1178,554h1v1h-1zM1184,392h1v1h-1zM1184,440h1v1h-1zM1184,458h1v1h-1zM1184,464h1v1h-1zM1184,542h1v1h-1zM1184,566h1v1h-1zM1190,398h1v1h-1zM1190,428h1v1h-1zM1190,446h1v1h-1zM1190,452h1v1h-1zM1190,476h1v1h-1zM1190,482h1v1h-1zM1190,494h1v1h-1zM1190,506h1v1h-1zM1190,548h1v1h-1zM1190,566h1v1h-1zM1190,572h1v1h-1zM1196,392h1v1h-1zM1196,398h1v1h-1zM1196,422h1v1h-1zM1196,440h1v1h-1zM1196,452h1v1h-1zM1196,476h1v1h-1zM1196,506h1v1h-1zM1196,524h1v1h-1zM1196,536h1v1h-1zM1196,548h1v1h-1zM1196,572h1v1h-1zM1202,398h1v1h-1zM1202,410h1v1h-1zM1202,428h1v1h-1zM1202,458h1v1h-1zM1202,476h1v1h-1zM1202,488h1v1h-1zM1202,524h1v1h-1zM1202,536h1v1h-1zM1202,542h1v1h-1zM1202,548h1v1h-1zM1202,560h1v1h-1zM1208,410h1v1h-1zM1208,416h1v1h-1zM1208,464h1v1h-1zM1208,488h1v1h-1zM1208,530h1v1h-1zM1208,536h1v1h-1zM1208,542h1v1h-1zM1208,560h1v1h-1zM1208,572h1v1h-1zM1214,410h1v1h-1zM1214,452h1v1h-1zM1214,482h1v1h-1zM1214,500h1v1h-1zM1214,548h1v1h-1zM1220,452h1v1h-1zM1220,482h1v1h-1zM1220,512h1v1h-1zM1220,536h1v1h-1zM1220,542h1v1h-1zM1220,548h1v1h-1zM1220,566h1v1h-1zM1220,572h1v1h-1zM1226,416h1v1h-1zM1226,428h1v1h-1zM1226,440h1v1h-1zM1226,464h1v1h-1zM1226,506h1v1h-1zM1226,518h1v1h-1zM1226,530h1v1h-1zM1226,536h1v1h-1zM1226,560h1v1h-1zM1232,392h1v1h-1zM1232,464h1v1h-1zM1232,512h1v1h-1zM1232,518h1v1h-1zM1232,524h1v1h-1zM1232,548h1v1h-1zM1232,554h1v1h-1zM1238,392h1v1h-1zM1238,416h1v1h-1zM1238,422h1v1h-1zM1238,434h1v1h-1zM1238,464h1v1h-1zM1238,524h1v1h-1zM1238,530h1v1h-1zM1238,554h1v1h-1zM1244,404h1v1h-1zM1244,446h1v1h-1zM1244,470h1v1h-1zM1244,500h1v1h-1zM1244,506h1v1h-1zM1244,530h1v1h-1zM1244,542h1v1h-1zM1250,428h1v1h-1zM1250,458h1v1h-1zM1250,482h1v1h-1zM1250,554h1v1h-1zM1256,398h1v1h-1zM1256,416h1v1h-1zM1256,434h1v1h-1zM1256,548h1v1h-1zM1256,572h1v1h-1zM1072,444h1v1h-1zM1081,444h1v1h-1zM1087,444h1v1h-1zM1091,444h1v1h-1zM1094,444h1v1h-1zM1102,444h1v1h-1zM1109,444h1v1h-1zM1114,444h1v1h-1zM1127,444h1v1h-1zM1170,444h1v1h-1zM1177,444h1v1h-1zM1194,444h1v1h-1zM1198,444h1v1h-1zM1208,444h1v1h-1zM1216,444h1v1h-1zM1225,444h1v1h-1zM1230,444h1v1h-1zM1256,444h1v1h-1zM880,450h1v1h-1zM896,450h1v1h-1zM904,450h1v1h-1zM923,450h1v1h-1zM926,450h1v1h-1zM929,450h1v1h-1zM933,450h1v1h-1zM942,450h1v1h-1zM945,450h1v1h-1zM948,450h1v1h-1zM952,450h1v1h-1zM956,450h1v1h-1zM961,450h1v1h-1zM969,450h1v1h-1zM977,450h1v1h-1zM984,450h1v1h-1zM888,456h1v1h-1zM897,456h1v1h-1zM901,456h1v1h-1zM906,456h1v1h-1zM932,456h1v1h-1zM936,456h1v1h-1zM940,456h1v1h-1zM948,456h1v1h-1zM951,456h1v1h-1zM968,456h1v1h-1zM974,456h1v1h-1zM982,456h1v1h-1zM997,456h1v1h-1zM1004,456h1v1h-1zM1007,456h1v1h-1zM1011,456h1v1h-1zM1019,456h1v1h-1zM1022,456h1v1h-1zM1026,456h1v1h-1zM1035,456h1v1h-1zM1038,456h1v1h-1zM1043,456h1v1h-1zM1052,456h1v1h-1zM1074,456h1v1h-1zM1087,456h1v1h-1zM1091,456h1v1h-1zM1095,456h1v1h-1zM1105,456h1v1h-1zM1123,456h1v1h-1zM1135,456h1v1h-1zM1157,456h1v1h-1zM1162,456h1v1h-1zM1169,456h1v1h-1zM1180,456h1v1h-1zM1188,456h1v1h-1zM1201,456h1v1h-1zM1206,456h1v1h-1zM1108,510h1v1h-1zM1113,510h1v1h-1zM1120,510h1v1h-1zM1130,510h1v1h-1zM1134,510h1v1h-1zM1143,510h1v1h-1zM1147,510h1v1h-1zM1151,510h1v1h-1zM1154,510h1v1h-1zM1169,510h1v1h-1zM1176,510h1v1h-1zM1179,510h1v1h-1zM1191,510h1v1h-1zM1195,510h1v1h-1zM1221,510h1v1h-1zM1226,510h1v1h-1zM1230,510h1v1h-1zM1236,510h1v1h-1zM765,521h1v1h-1zM790,521h1v1h-1zM796,521h1v1h-1zM799,521h1v1h-1zM803,521h1v1h-1zM809,521h1v1h-1zM816,521h1v1h-1zM824,521h1v1h-1zM843,521h1v1h-1zM859,521h1v1h-1zM862,521h1v1h-1zM876,521h1v1h-1zM884,521h1v1h-1zM894,521h1v1h-1zM909,521h1v1h-1zM914,521h1v1h-1zM918,521h1v1h-1zM926,521h1v1h-1zM936,521h1v1h-1zM939,521h1v1h-1zM944,521h1v1h-1zM948,521h1v1h-1zM952,521h1v1h-1zM956,521h1v1h-1zM961,521h1v1h-1zM964,521h1v1h-1zM969,521h1v1h-1zM974,521h1v1h-1zM978,521h1v1h-1zM982,521h1v1h-1zM1018,521h1v1h-1zM1023,521h1v1h-1zM1030,521h1v1h-1zM1037,521h1v1h-1zM1045,521h1v1h-1zM984,528h1v1h-1zM992,528h1v1h-1zM996,528h1v1h-1zM1001,528h1v1h-1zM1018,528h1v1h-1zM1055,528h1v1h-1zM1062,528h1v1h-1zM1069,528h1v1h-1zM1073,528h1v1h-1zM1086,528h1v1h-1zM1090,528h1v1h-1zM1098,528h1v1h-1zM1101,528h1v1h-1zM1104,528h1v1h-1zM1112,528h1v1h-1zM1116,528h1v1h-1zM1119,528h1v1h-1zM1132,528h1v1h-1zM1144,528h1v1h-1zM1162,528h1v1h-1zM1181,528h1v1h-1zM1188,528h1v1h-1zM1193,528h1v1h-1zM1202,528h1v1h-1zM1205,528h1v1h-1zM1209,528h1v1h-1zM1214,528h1v1h-1zM1218,528h1v1h-1zM1221,528h1v1h-1zM1224,528h1v1h-1zM1255,528h1v1h-1zM804,567h1v1h-1zM819,567h1v1h-1zM841,567h1v1h-1zM848,567h1v1h-1zM855,567h1v1h-1zM862,567h1v1h-1zM867,567h1v1h-1zM871,567h1v1h-1zM882,567h1v1h-1zM888,567h1v1h-1zM905,567h1v1h-1zM927,567h1v1h-1zM935,567h1v1h-1zM940,567h1v1h-1zM948,567h1v1h-1zM958,567h1v1h-1zM962,567h1v1h-1zM979,567h1v1h-1zM983,567h1v1h-1zM1003,567h1v1h-1zM1018,567h1v1h-1zM1030,567h1v1h-1zM1034,567h1v1h-1zM1041,567h1v1h-1zM1071,567h1v1h-1zM1089,567h1v1h-1zM1097,567h1v1h-1zM1100,567h1v1h-1zM1117,567h1v1h-1zM1129,567h1v1h-1zM1137,567h1v1h-1zM1146,567h1v1h-1zM1191,567h1v1h-1zM1196,567h1v1h-1zM1217,567h1v1h-1zM1220,567h1v1h-1zM1223,567h1v1h-1zM1251,567h1v1h-1zM1254,567h1v1h-1zM890,392h1v1h-1zM890,396h1v1h-1zM890,407h1v1h-1zM890,417h1v1h-1zM890,433h1v1h-1zM890,441h1v1h-1zM890,444h1v1h-1zM890,455h1v1h-1zM890,461h1v1h-1zM890,472h1v1h-1zM890,478h1v1h-1zM890,489h1v1h-1zM890,495h1v1h-1zM890,504h1v1h-1zM890,512h1v1h-1zM890,522h1v1h-1zM890,528h1v1h-1zM890,537h1v1h-1zM890,542h1v1h-1zM890,548h1v1h-1zM890,552h1v1h-1zM890,557h1v1h-1zM890,563h1v1h-1zM890,569h1v1h-1zM1090,402h1v1h-1zM1090,411h1v1h-1zM1090,443h1v1h-1zM1090,453h1v1h-1zM1090,464h1v1h-1zM1090,468h1v1h-1zM1090,488h1v1h-1zM1090,491h1v1h-1zM1090,502h1v1h-1zM1090,505h1v1h-1zM1090,521h1v1h-1zM1090,524h1v1h-1zM1090,536h1v1h-1zM1090,546h1v1h-1zM1090,560h1v1h-1zM1090,568h1v1h-1zM1090,572h1v1h-1zM818,392h1v1h-1zM818,405h1v1h-1zM818,416h1v1h-1zM818,427h1v1h-1zM818,432h1v1h-1zM818,436h1v1h-1zM818,443h1v1h-1zM818,446h1v1h-1zM818,452h1v1h-1zM818,457h1v1h-1zM818,472h1v1h-1zM818,498h1v1h-1zM818,504h1v1h-1zM818,510h1v1h-1zM818,520h1v1h-1zM818,526h1v1h-1zM818,532h1v1h-1zM818,543h1v1h-1zM818,548h1v1h-1zM818,568h1v1h-1zM818,571h1v1h-1zM1008,400h1v1h-1zM1008,403h1v1h-1zM1008,407h1v1h-1zM1008,410h1v1h-1zM1008,416h1v1h-1zM1008,427h1v1h-1zM1008,432h1v1h-1zM1008,436h1v1h-1zM1008,442h1v1h-1zM1008,452h1v1h-1zM1008,461h1v1h-1zM1008,465h1v1h-1zM1008,476h1v1h-1zM1008,484h1v1h-1zM1008,489h1v1h-1zM1008,495h1v1h-1zM1008,499h1v1h-1zM1008,505h1v1h-1zM1008,510h1v1h-1zM1008,515h1v1h-1zM1008,524h1v1h-1zM1008,541h1v1h-1zM1008,548h1v1h-1zM1008,566h1v1h-1z" fill="#7a7874"/>
<circle cx="1009" cy="393" r="5.5" fill="#4a3f22" stroke="#111" stroke-width=".8"/>
<circle cx="784" cy="406" r="5" fill="#fff"/>
<circle cx="1235" cy="406" r="5" fill="#fff"/>
<circle cx="784" cy="554" r="5" fill="#fff"/>
<circle cx="1235" cy="554" r="5" fill="#fff"/>
<circle cx="955.5" cy="567" r="5.5" fill="#fff"/>
<circle cx="964.3" cy="479.6" r="4" fill="#fff"/>
<circle cx="964.3" cy="525.4" r="4" fill="#fff"/>
<circle cx="867.6" cy="544.4" r="3" fill="#fff"/>
<circle cx="1150.6" cy="544.4" r="3" fill="#fff"/>
<rect x="810" y="455" width="4" height="4" fill="#fff"/>
<rect x="866" y="455" width="4" height="4" fill="#fff"/>
<rect x="1149" y="455" width="4" height="4" fill="#fff"/>
<rect x="1205" y="455" width="4" height="4" fill="#fff"/>
<circle cx="776" cy="462" r="28" fill="#2c5aa6" stroke="#1b3f80" stroke-width="1"/>
<circle cx="776" cy="462" r="13" fill="#a9a9a6" stroke="#1b2f60" stroke-width="1"/>
<circle cx="776" cy="462" r="7" fill="#8a7040" stroke="#333" stroke-width=".8"/>
<circle cx="776" cy="462" r="2.5" fill="none" stroke="#333" stroke-width=".8"/>
<circle cx="1242" cy="462" r="28" fill="#2c5aa6" stroke="#1b3f80" stroke-width="1"/>
<circle cx="1242" cy="462" r="13" fill="#a9a9a6" stroke="#1b2f60" stroke-width="1"/>
<circle cx="1242" cy="462" r="7" fill="#8a7040" stroke="#333" stroke-width=".8"/>
<circle cx="1242" cy="462" r="2.5" fill="none" stroke="#333" stroke-width=".8"/>
<rect x="840" y="586" width="339" height="48" fill="#1f1e1c" stroke="#000"/>
<rect x="852" y="634" width="315" height="4" fill="#6b6860"/>
<rect x="840" y="634" width="12" height="304.5" fill="#1f1e1c" stroke="#000" stroke-width=".6"/>
<rect x="868.4" y="634" width="13" height="304.5" fill="#1f1e1c" stroke="#000" stroke-width=".6"/>
<rect x="898.4" y="634" width="13" height="304.5" fill="#1f1e1c" stroke="#000" stroke-width=".6"/>
<rect x="928.4" y="634" width="13" height="304.5" fill="#1f1e1c" stroke="#000" stroke-width=".6"/>
<rect x="958.4" y="634" width="13" height="304.5" fill="#1f1e1c" stroke="#000" stroke-width=".6"/>
<rect x="988.4" y="634" width="13" height="304.5" fill="#1f1e1c" stroke="#000" stroke-width=".6"/>
<rect x="1018.4" y="634" width="13" height="304.5" fill="#1f1e1c" stroke="#000" stroke-width=".6"/>
<rect x="1048.4" y="634" width="13" height="304.5" fill="#1f1e1c" stroke="#000" stroke-width=".6"/>
<rect x="1078.4" y="634" width="13" height="304.5" fill="#1f1e1c" stroke="#000" stroke-width=".6"/>
<rect x="1108.4" y="634" width="13" height="304.5" fill="#1f1e1c" stroke="#000" stroke-width=".6"/>
<rect x="1138.4" y="634" width="13" height="304.5" fill="#1f1e1c" stroke="#000" stroke-width=".6"/>
<rect x="1168.4" y="634" width="11.5" height="304.5" fill="#1f1e1c" stroke="#000" stroke-width=".6"/>
</svg>
<svg class="a" style="left:0;top:958px" width="1920" height="62" viewBox="0 958 1920 62">
<rect x="6" y="958" width="44" height="8" rx="4" fill="#e2e2e2"/>
<rect x="13" y="986" width="2.5" height="15" fill="#7e7e7e"/><path d="M27,986 v15 l-11,-7.5z" fill="#7e7e7e"/>
<path d="M45,993.5 l12,-7.5 v15z" fill="#7e7e7e"/><rect x="58.5" y="990" width="2.5" height="7" fill="#7e7e7e"/>
<path d="M76,984 l15,9.5 l-15,9.5z" fill="#7e7e7e"/>
<rect x="106" y="990" width="2.5" height="7" fill="#7e7e7e"/><path d="M110,986 l12,7.5 l-12,7.5z" fill="#7e7e7e"/>
<path d="M138,986 l11,7.5 l-11,7.5z" fill="#7e7e7e"/><rect x="149.5" y="986" width="2.5" height="15" fill="#7e7e7e"/>
<rect x="193" y="1008" width="1657" height="2" fill="#c8c8c8"/><rect x="1853" y="1008" width="4.5" height="2" fill="#c8c8c8"/><rect x="1860.5" y="1008" width="3.5" height="2" fill="#c8c8c8"/>
<rect x="191.3" y="1002" width="2.4" height="7" fill="#c8c8c8"/>
<rect x="221.3" y="1002" width="2.4" height="7" fill="#c8c8c8"/>
<rect x="251.3" y="1002" width="2.4" height="7" fill="#c8c8c8"/>
<rect x="281.3" y="1002" width="2.4" height="7" fill="#c8c8c8"/>
<rect x="311.3" y="1002" width="2.4" height="7" fill="#c8c8c8"/>
<rect x="341.3" y="1002" width="2.4" height="7" fill="#c8c8c8"/>
<rect x="371.3" y="1002" width="2.4" height="7" fill="#c8c8c8"/>
<rect x="401.3" y="1002" width="2.4" height="7" fill="#c8c8c8"/>
<rect x="431.3" y="1002" width="2.4" height="7" fill="#c8c8c8"/>
<rect x="461.3" y="1002" width="2.4" height="7" fill="#c8c8c8"/>
<rect x="491.3" y="1002" width="2.4" height="7" fill="#c8c8c8"/>
<rect x="521.3" y="1002" width="2.4" height="7" fill="#c8c8c8"/>
<rect x="551.3" y="1002" width="2.4" height="7" fill="#c8c8c8"/>
<rect x="581.3" y="1002" width="2.4" height="7" fill="#c8c8c8"/>
<rect x="611.3" y="1002" width="2.4" height="7" fill="#c8c8c8"/>
<rect x="641.3" y="1002" width="2.4" height="7" fill="#c8c8c8"/>
<rect x="671.3" y="1002" width="2.4" height="7" fill="#c8c8c8"/>
<rect x="701.3" y="1002" width="2.4" height="7" fill="#c8c8c8"/>
<rect x="731.3" y="1002" width="2.4" height="7" fill="#c8c8c8"/>
<rect x="761.3" y="1002" width="2.4" height="7" fill="#c8c8c8"/>
<rect x="791.3" y="1002" width="2.4" height="7" fill="#c8c8c8"/>
<rect x="821.3" y="1002" width="2.4" height="7" fill="#c8c8c8"/>
<rect x="851.3" y="1002" width="2.4" height="7" fill="#c8c8c8"/>
<rect x="881.3" y="1002" width="2.4" height="7" fill="#c8c8c8"/>
<rect x="911.3" y="1002" width="2.4" height="7" fill="#c8c8c8"/>
<rect x="941.3" y="1002" width="2.4" height="7" fill="#c8c8c8"/>
<rect x="971.3" y="1002" width="2.4" height="7" fill="#c8c8c8"/>
<rect x="1001.3" y="1002" width="2.4" height="7" fill="#c8c8c8"/>
<rect x="1031.3" y="1002" width="2.4" height="7" fill="#c8c8c8"/>
<rect x="1061.3" y="1002" width="2.4" height="7" fill="#c8c8c8"/>
<rect x="1091.3" y="1002" width="2.4" height="7" fill="#c8c8c8"/>
<rect x="1121.3" y="1002" width="2.4" height="7" fill="#c8c8c8"/>
<rect x="1151.3" y="1002" width="2.4" height="7" fill="#c8c8c8"/>
<rect x="1181.3" y="1002" width="2.4" height="7" fill="#c8c8c8"/>
<rect x="1211.3" y="1002" width="2.4" height="7" fill="#c8c8c8"/>
<rect x="1241.3" y="1002" width="2.4" height="7" fill="#c8c8c8"/>
<rect x="1271.3" y="1002" width="2.4" height="7" fill="#c8c8c8"/>
<rect x="1301.3" y="1002" width="2.4" height="7" fill="#c8c8c8"/>
<rect x="1331.3" y="1002" width="2.4" height="7" fill="#c8c8c8"/>
<rect x="1361.3" y="1002" width="2.4" height="7" fill="#c8c8c8"/>
<rect x="1391.3" y="1002" width="2.4" height="7" fill="#c8c8c8"/>
<rect x="1421.3" y="1002" width="2.4" height="7" fill="#c8c8c8"/>
<rect x="1451.3" y="1002" width="2.4" height="7" fill="#c8c8c8"/>
<rect x="1481.3" y="1002" width="2.4" height="7" fill="#c8c8c8"/>
<rect x="1511.3" y="1002" width="2.4" height="7" fill="#c8c8c8"/>
<rect x="1541.3" y="1002" width="2.4" height="7" fill="#c8c8c8"/>
<rect x="1571.3" y="1002" width="2.4" height="7" fill="#c8c8c8"/>
<rect x="1601.3" y="1002" width="2.4" height="7" fill="#c8c8c8"/>
<rect x="1631.3" y="1002" width="2.4" height="7" fill="#c8c8c8"/>
<rect x="1661.3" y="1002" width="2.4" height="7" fill="#c8c8c8"/>
<rect x="1691.3" y="1002" width="2.4" height="7" fill="#c8c8c8"/>
<rect x="1721.3" y="1002" width="2.4" height="7" fill="#c8c8c8"/>
<rect x="1751.3" y="1002" width="2.4" height="7" fill="#c8c8c8"/>
<rect x="1781.3" y="1002" width="2.4" height="7" fill="#c8c8c8"/>
<rect x="1811.3" y="1002" width="2.4" height="7" fill="#c8c8c8"/>
<rect x="1841.3" y="1002" width="2.4" height="7" fill="#c8c8c8"/>
<rect x="814.8" y="1002.5" width="11" height="11.7" rx="1" fill="#8a8a8a"/><path d="M820.3,1004.5 v8 M816.3,1008.4 h8" stroke="#fff" stroke-width="2"/>
<rect x="1474.8" y="1002.5" width="11" height="11.7" rx="1" fill="#8a8a8a"/><path d="M1480.3,1004.5 v8 M1476.3,1008.4 h8" stroke="#fff" stroke-width="2"/>
<defs><g id="tiS"><path d="M3,1.4 h12.5 M0.9,4 v11 M17.7,4 v5.5 M3,17.1 h5" stroke="#8a8a8a" stroke-width="1.3"/><rect x="-0.5" y="0" width="2.6" height="2.6" fill="#1a8ae8"/><rect x="16.4" y="0" width="2.6" height="2.6" fill="#1a8ae8"/><rect x="-0.5" y="15.8" width="2.6" height="2.6" fill="#1a8ae8"/><path d="M11.2,18.3 L18.2,11.3" stroke="#f5a40a" stroke-width="3.6"/><path d="M9.6,19.8 l0.8,-3 l2.3,2.3z" fill="#555"/><circle cx="18.6" cy="10.9" r="1.8" fill="#e8322e"/></g><g id="tiE"><path d="M0,4.6 L4,0.2 H15 L11.4,4.6 Z" fill="#9fd0f5"/><rect x="0" y="4.6" width="11.4" height="11.3" fill="#6cb0e6"/><path d="M11.4,4.6 L15,0.2 V12 L11.4,15.9 Z" fill="#4a90cc"/><path d="M0,16.6 H11.4 L15,12.6 V15 L11.4,19.6 H0 Z" fill="#c4c4c4"/><path d="M18.25,16 V4" stroke="#333" stroke-width="1.2"/><path d="M16.3,5 L18.25,1.2 L20.2,5 Z" fill="#333"/></g><g id="tiL"><path d="M2,5 L6,1.3 H17.5 Q18.5,1.3 18.5,2.3 V14 L14.5,18.6 H3 Q2,18.6 2,17.6 Z" fill="#d2d2d2" stroke="#6a6a6a" stroke-width="1.3"/><g fill="none" stroke="#7a7a7a" stroke-width="1.3"><ellipse cx="7.8" cy="11.6" rx="3.6" ry="2.3" transform="rotate(-40 7.8 11.6)"/><ellipse cx="12.2" cy="8" rx="3.6" ry="2.3" transform="rotate(-40 12.2 8)"/></g></g><g id="tiC"><g transform="scale(0.505) translate(-669,-103.2)"><path d="M669,120 L673.8,115.5 H681.3 V108 L686.3,103.2 H708.8 V124.7 L703.8,129.7 H695.8 V138 L691.3,142.6 H669 Z" fill="#6cb0e6"/><path d="M669,120 L673.8,115.5 H681.3 V120 Z M681.3,108 L686.3,103.2 H708.8 L703.8,108 Z" fill="#9fd0f5"/><path d="M703.8,108 L708.8,103.2 V124.7 L703.8,129.7 Z M691.3,129.7 H695.8 V138 L691.3,142.6 Z" fill="#4a90cc"/></g></g><g id="tiF"><circle cx="14.3" cy="10.3" r="4.7" fill="#a9c4e8" stroke="#4a5a70" stroke-width="1"/><path d="M9.6,10 H4" stroke="#111" stroke-width="2"/><path d="M0.3,10 L5.5,6.3 V13.7 Z" fill="#111"/></g><g id="tiM"><path d="M1,19 V6 Q1,1 4.5,0.8 Q8,1 8,4.5 V18 Q6,15.5 4.5,15.5 Z" fill="#cfcfcf" stroke="#666" stroke-width="1.1"/><path d="M2.5,3 q2,-1 4,0.5" fill="none" stroke="#999"/><path d="M19,19 V6 Q19,1 15.5,0.8 Q12,1 12,4.5 V18 Q14,15.5 15.5,15.5 Z" fill="#cfcfcf" stroke="#666" stroke-width="1.1"/><path d="M11.6,5 v4 M8.6,11 v4" stroke="#1a8ae8" stroke-width="1.5"/></g><g id="tim"><path d="M1,18.5 V6.5 L7,1 Q8,0.3 9,1 L16,6.5 V18.5 L12.5,15 V9 Q10,7 8.5,9 V15 L5,18.5 Z" fill="#cfcfcf" stroke="#666" stroke-width="1.1"/><circle cx="8.5" cy="3.5" r="1.5" fill="none" stroke="#777" stroke-width=".8"/></g><g id="tiH"><path d="M8,0.3 H19.5 V11 L16.5,13.5 H8 Z" fill="#6cb0e6"/><path d="M16.5,0.3 L19.5,0.3 V11 L16.5,13.5 Z" fill="#4a90cc"/><rect x="0.8" y="3.5" width="15" height="15.8" fill="#f5f5f5" stroke="#777" stroke-width="1.2"/><rect x="4" y="7" width="9" height="9" fill="#fff" stroke="#888" stroke-width="1"/></g><g id="tiP"><rect x="0.8" y="6.8" width="4" height="7" rx=".6" fill="none" stroke="#666" stroke-width="1.3"/><rect x="8" y="6.8" width="4" height="7" rx=".6" fill="none" stroke="#666" stroke-width="1.3"/><rect x="15.2" y="6.8" width="4" height="7" rx=".6" fill="none" stroke="#666" stroke-width="1.3"/></g><g id="tiG"><rect x="0.7" y="0.7" width="7.3" height="19" fill="#f5f5f5" stroke="#666" stroke-width="1.3"/><rect x="8.3" y="0.3" width="11.7" height="7.7" fill="#6cb0e6"/></g><g id="tiX"><path d="M0.8,9 L8,1 H16 L19.6,5 V19.3 H3.5 L0.8,16.5 Z" fill="#c4c4c4" stroke="#666" stroke-width="1.2"/><path d="M1.5,9.5 L8.8,2 L14,6.5 L6.5,13.5 Z" fill="#6cb0e6"/><path d="M6.5,13.5 V19 M6.5,13.5 H19.5" stroke="#eee" stroke-width="1"/></g><g id="tiR"><path d="M0.5,8 Q10,0 19.5,8 L17,11.5 Q10,6.5 3,11.5 Z" fill="#9fd0f5"/><path d="M3,11.5 Q10,6.5 17,11.5 V17 Q10,12 3,17 Z" fill="#6cb0e6"/><path d="M0.5,8 L3,11.5 V17 L0.5,13.5 Z" fill="#4a90cc"/></g><g id="tiY"><rect x="0.8" y="0.8" width="9" height="8.5" rx="3.5" fill="#e0e0e0" stroke="#666" stroke-width="1.1"/><path d="M2.5,11.5 V15.5 H7.5 M6,13.8 L7.8,15.5 L6,17.2" fill="none" stroke="#333" stroke-width="1.1"/><path d="M9.7,12.5 L12.5,9.6 H19.9 V17 L17,19.8 H9.7 Z" fill="#6cb0e6"/><path d="M17,12.5 L19.9,9.6 V17 L17,19.8 Z" fill="#4a90cc"/><path d="M9.7,12.5 L12.5,9.6 H19.9 L17,12.5 Z" fill="#9fd0f5"/></g></defs>
<use href="#tiL" x="183" y="978"/>
<use href="#tiS" x="213" y="978"/>
<use href="#tiE" x="243" y="978"/>
<use href="#tiE" x="273" y="978"/>
<use href="#tiS" x="303" y="978"/>
<use href="#tiE" x="333" y="978"/>
<use href="#tiC" x="363" y="978"/>
<use href="#tiS" x="393" y="978"/>
<use href="#tiS" x="423" y="978"/>
<use href="#tiS" x="453" y="978"/>
<use href="#tiE" x="483" y="978"/>
<use href="#tiS" x="513" y="978"/>
<use href="#tiE" x="543" y="978"/>
<use href="#tiF" x="573" y="978"/>
<use href="#tiL" x="603" y="978"/>
<use href="#tiM" x="633" y="978"/>
<use href="#tiS" x="663" y="978"/>
<use href="#tiE" x="693" y="978"/>
<use href="#tiS" x="723" y="978"/>
<use href="#tiE" x="753" y="978"/>
<use href="#tiH" x="783" y="978"/>
<use href="#tiP" x="813" y="978"/>
<use href="#tiG" x="843" y="978"/>
<use href="#tiS" x="873" y="978"/>
<use href="#tiE" x="903" y="978"/>
<use href="#tiX" x="933" y="978"/>
<use href="#tiE" x="963" y="978"/>
<use href="#tiM" x="993" y="978"/>
<use href="#tiF" x="1023" y="978"/>
<use href="#tiL" x="1053" y="978"/>
<use href="#tiM" x="1083" y="978"/>
<use href="#tiS" x="1113" y="978"/>
<use href="#tiE" x="1143" y="978"/>
<use href="#tiC" x="1173" y="978"/>
<use href="#tiH" x="1203" y="978"/>
<use href="#tiE" x="1233" y="978"/>
<use href="#tiS" x="1263" y="978"/>
<use href="#tiE" x="1293" y="978"/>
<use href="#tiR" x="1323" y="978"/>
<use href="#tiS" x="1353" y="978"/>
<use href="#tiE" x="1383" y="978"/>
<use href="#tiC" x="1413" y="978"/>
<use href="#tiH" x="1443" y="978"/>
<use href="#tiP" x="1473" y="978"/>
<use href="#tiG" x="1503" y="978"/>
<use href="#tiS" x="1533" y="978"/>
<use href="#tiE" x="1563" y="978"/>
<use href="#tiS" x="1593" y="978"/>
<use href="#tiE" x="1623" y="978"/>
<use href="#tiM" x="1653" y="978"/>
<use href="#tiY" x="1683" y="978"/>
<use href="#tiY" x="1713" y="978"/>
<use href="#tiF" x="1743" y="978"/>
<use href="#tim" x="1773" y="978"/>
<use href="#tim" x="1803" y="978"/>
<use href="#tiS" x="1833" y="978"/>
<g transform="translate(1893,994)"><circle r="8" fill="#7a7a7a"/><rect x="-2.6" y="-10.3" width="5.2" height="5" fill="#7a7a7a" transform="rotate(0)"/><rect x="-2.6" y="-10.3" width="5.2" height="5" fill="#7a7a7a" transform="rotate(45)"/><rect x="-2.6" y="-10.3" width="5.2" height="5" fill="#7a7a7a" transform="rotate(90)"/><rect x="-2.6" y="-10.3" width="5.2" height="5" fill="#7a7a7a" transform="rotate(135)"/><rect x="-2.6" y="-10.3" width="5.2" height="5" fill="#7a7a7a" transform="rotate(180)"/><rect x="-2.6" y="-10.3" width="5.2" height="5" fill="#7a7a7a" transform="rotate(225)"/><rect x="-2.6" y="-10.3" width="5.2" height="5" fill="#7a7a7a" transform="rotate(270)"/><rect x="-2.6" y="-10.3" width="5.2" height="5" fill="#7a7a7a" transform="rotate(315)"/><circle r="3.5" fill="#f3f3f3"/></g>
</svg>
<div class="a" style="left:811px;top:920px;width:299px;height:30px;background:#f3f3f3"></div>
<svg class="a" style="left:811px;top:920px" width="299" height="30" viewBox="811 920 299 30">
<ellipse cx="824.7" cy="935" rx="9.5" ry="4.2" fill="none" stroke="#333" stroke-width="1.3"/><path d="M831,930.5 l3,0.8 l-2.2,2.2z" fill="#333"/><path d="M824.6,925 v21" stroke="#1a8ae8" stroke-width="1.5" stroke-dasharray="3.5 1.5"/>
<path d="M842.7,932.7 h7 l-3.5,4.8z" fill="#777"/>
<rect x="859.8" y="932.8" width="17.5" height="11.5" fill="#5aa7e6" stroke="#777" stroke-width="1.5"/><path d="M860.5,932.5 l2.5,-6.5 l1,4.5 l12,2" fill="none" stroke="#777" stroke-width="1.3"/>
<path d="M895.5,945 q-3,-1 -4.5,-4.5 l-1.8,-4 q0,-1.5 1.5,-1 l2.5,2.5 v-11 q1.1,-1.3 2.2,0 v8 v-10 q1.1,-1.3 2.2,0 v10 v-9 q1.1,-1.3 2.2,0 v9 v-7 q1.1,-1.3 2.2,0 v9.5 q0,5 -2.5,7.5 z" fill="none" stroke="#777" stroke-width="1"/>
<circle cx="929.3" cy="934.6" r="6" fill="#ddd" stroke="#777" stroke-width="1.3"/><path d="M933.5,939 l4.2,4.5" stroke="#8a5a2a" stroke-width="2"/><path d="M940.5,924.5 v6 M937.5,927.5 h6 M937.5,933 h6" stroke="#555" stroke-width="1.1"/>
<rect x="955.5" y="925.5" width="20.5" height="20" fill="none" stroke="#666" stroke-width="1" stroke-dasharray="2 1.5"/><circle cx="963.8" cy="933.5" r="7.8" fill="#ddd" stroke="#777" stroke-width="1.3"/><path d="M970,940 l4.5,4.5" stroke="#8a5a2a" stroke-width="2"/>
<path d="M983,932.7 h6.6 l-3.3,4.8z" fill="#777"/>
<rect x="998.8" y="928" width="18.5" height="13.5" fill="#bdbdbd" stroke="#777" stroke-width="1.5"/><path d="M1003.5,944.5 h10 M1008.5,941.5 v3" stroke="#777" stroke-width="1.5"/>
<path d="M1021.5,932.7 h6.2 l-3.1,4.8z" fill="#777"/>
<path d="M1036.6,925.6 h16 v16 h-16z M1041.9,925.6 v16 M1047.3,925.6 v16 M1036.6,930.9 h16 M1036.6,936.3 h16" fill="none" stroke="#777" stroke-width="1.3"/>
<path d="M1060.4,932.7 h6.3 l-3.15,4.8z" fill="#777"/>
<rect x="1075.6" y="926.6" width="18.6" height="16.6" fill="none" stroke="#777" stroke-width="1.3"/><path d="M1084.9,926.6 v16.6 M1075.6,934.9 h18.6" stroke="#777" stroke-width="1.1"/>
<rect x="1078" y="929" width="4.5" height="3" fill="none" stroke="#888" stroke-width=".8"/><rect x="1087.5" y="929" width="4.5" height="3" fill="none" stroke="#888" stroke-width=".8"/><rect x="1078" y="937.5" width="4.5" height="3" fill="none" stroke="#888" stroke-width=".8"/><rect x="1087.5" y="937.5" width="4.5" height="3" fill="none" stroke="#888" stroke-width=".8"/>
<path d="M1099.4,932.7 h6.2 l-3.1,4.8z" fill="#777"/>
</svg>
<div class="t" style="left:1647px;top:931px;font-size:13px;font-weight:bold;color:#333;letter-spacing:0.42px">2 Faces | Min Distance : 145.301 mm</div>
<svg class="a" style="left:1800px;top:200px" width="100" height="95" viewBox="1800 200 100 95">
<rect x="1830.5" y="212.5" width="52" height="52" fill="#d6d6d6" stroke="#777" stroke-width="1"/>
<rect x="1840" y="222" width="33" height="33" fill="#d0d0d0"/>
<path d="M1822.5,211.7 h61.5" stroke="#f04545" stroke-width="1.5"/>
<path d="M1883.8,212 v61.5" stroke="#6a6af5" stroke-width="1.5"/>
</svg>
<div class="t" style="left:1809px;top:205px;font-size:13px;font-weight:bold;color:#ff7a7a;transform:scaleX(.85);transform-origin:left">X</div>
<div class="t" style="left:1879px;top:275px;font-size:13px;font-weight:bold;color:#7a7aff;transform:scaleX(.85);transform-origin:left">Z</div>
<div class="t" style="left:1832px;top:232px;font-size:13px;font-weight:bold;color:#8a8a8a;transform:scaleX(.86);transform-origin:left">BOTTOM</div>
<div class="a" style="left:548.5px;top:1030.5px;width:273px;height:38.5px;background:#fbfbfb;border:1px solid #dedede;border-radius:19px"></div>
<svg class="a" style="left:0;top:1021px" width="1920" height="59" viewBox="0 1021 1920 59">
<defs><linearGradient id="moon" x1="0" y1="0" x2="0" y2="1"><stop offset="0" stop-color="#ffc83d"/><stop offset="1" stop-color="#f07a10"/></linearGradient></defs>
<path d="M26,1052.5 A14.5,14.5 0 0 0 54,1046.5 L44,1046.5 Q38,1053 26,1052.5z" fill="url(#moon)"/>
<circle cx="48.6" cy="1037.5" r="9.6" fill="#c42b1c"/><path d="M47.8,1033 l2.3,-1.3 v11 h-2 v-8.3 l-1.6,.9z" fill="#fff"/>
<defs><linearGradient id="winl" x1="0" y1="0" x2="1" y2="1"><stop offset="0" stop-color="#52c8fb"/><stop offset="1" stop-color="#0b67c8"/></linearGradient></defs>
<path d="M503,1037 q0,-1 1,-1 h13 v14 h-14z M518,1036 h13 q1,0 1,1 v13 h-14z M503,1051 h14 v14 h-13 q-1,0 -1,-1z M518,1051 h14 v13 q0,1 -1,1 h-13z" fill="url(#winl)"/>
<circle cx="571" cy="1048" r="6.5" fill="none" stroke="#1a1a1a" stroke-width="2"/><path d="M575.5,1052.5 l5,5" stroke="#1a1a1a" stroke-width="2.2"/>
<rect x="839" y="1043.5" width="23" height="20.5" rx="2" fill="#222"/><rect x="846" y="1036" width="23" height="20" rx="2" fill="#f4f4f4" stroke="#e2e2e2" stroke-width=".8"/><rect x="846" y="1043.5" width="16" height="12.5" fill="#b0b0b0"/>
<defs><linearGradient id="copA" x1="0" y1="0" x2="0" y2="1"><stop offset="0" stop-color="#1c9cf0"/><stop offset=".55" stop-color="#33b36a"/><stop offset="1" stop-color="#f6c000"/></linearGradient><linearGradient id="copB" x1="0" y1="0" x2="0" y2="1"><stop offset="0" stop-color="#9f4ded"/><stop offset=".5" stop-color="#ee5d8e"/><stop offset="1" stop-color="#ff9a30"/></linearGradient><linearGradient id="tms" x1="0" y1="0" x2="1" y2="1"><stop offset="0" stop-color="#8b93f5"/><stop offset="1" stop-color="#5a5fd0"/></linearGradient></defs>
<g transform="translate(0,0)"><path d="M900.5,1036 h13 q5,0 4,4 l-6.5,15 q-1.5,3 -5,3 h-8 q-5,0 -3.5,-4.5 l4.5,-12 q1.5,-5.5 5.5,-5.5z" fill="url(#copA)"/><path d="M914,1043 h6 q5,0 3.5,4.5 l-4.5,12 q-1.5,3.5 -5,3.5 h-12 q-4,0 -3,-3.5 l1,-3 h5 q2,0 3,-2 l3.5,-8 q1,-3.5 3.5,-3.5z" fill="url(#copB)"/></g>
<g transform="translate(110,0)"><path d="M900.5,1036 h13 q5,0 4,4 l-6.5,15 q-1.5,3 -5,3 h-8 q-5,0 -3.5,-4.5 l4.5,-12 q1.5,-5.5 5.5,-5.5z" fill="url(#copA)"/><path d="M914,1043 h6 q5,0 3.5,4.5 l-4.5,12 q-1.5,3.5 -5,3.5 h-12 q-4,0 -3,-3.5 l1,-3 h5 q2,0 3,-2 l3.5,-8 q1,-3.5 3.5,-3.5z" fill="url(#copB)"/></g>
<circle cx="959.6" cy="1039.3" r="4.4" fill="#8f96f3"/><circle cx="970.8" cy="1043" r="4" fill="#7a80e6"/>
<rect x="966" y="1048" width="10.7" height="15.8" rx="4.5" fill="#6b70dc"/><rect x="950.8" y="1045" width="17.5" height="18.8" rx="4.5" fill="url(#tms)"/>
<rect x="949" y="1049" width="11.8" height="11.8" rx="2" fill="#4b53bc"/><path d="M951.8,1052.2 h6.2 M954.9,1052.2 v6.5" stroke="#fff" stroke-width="1.8"/>
<rect x="1013.3" y="1056.2" width="20.5" height="8.5" rx="1.5" fill="#111"/>
<text x="1023.5" y="1063.3" font-size="7" font-family="Liberation Sans" font-weight="bold" fill="#fff" text-anchor="middle">M365</text>
<defs><linearGradient id="edg1" x1="0" y1="1" x2="1" y2="0"><stop offset="0" stop-color="#0c59a4"/><stop offset=".6" stop-color="#1b8be0"/><stop offset="1" stop-color="#35c1f1"/></linearGradient><linearGradient id="edg2" x1="0" y1="0" x2="1" y2="1"><stop offset="0" stop-color="#35b9e8"/><stop offset="1" stop-color="#62d96b"/></linearGradient></defs>
<circle cx="1073.8" cy="1049.9" r="15.1" fill="url(#edg1)"/>
<path d="M1060,1045 q3,-10 14,-10.5 q13,.5 15,13 q0,5 -4,6 q-5,1 -10,-1 q-4,-2 -3,-5 q-6,-3 -12,-2.5z" fill="url(#edg2)"/>
<path d="M1067,1051 q.5,-6 6,-6.5 q5,0 6.5,4 q-3,-1 -5,1 q-2,2 0,5 q2,2 6,2.5 q3,.5 5,-.5 q-3,7 -10,8 q-7,1 -11.5,-4 q-2,-3 -2,-5 q2,2 5,-4.5z" fill="#fff" opacity=".95"/>
<path d="M1063,1061 q4,5 11,5 q8,0 12.5,-6.5 q-4,2 -9,1.5 q-7,-1 -9,-7 q-1,-4 0,-6 q-6,3 -5.5,13z" fill="#1559a8"/>
<defs><linearGradient id="fld" x1="0" y1="0" x2="0" y2="1"><stop offset="0" stop-color="#ffd86a"/><stop offset="1" stop-color="#f7b51c"/></linearGradient></defs>
<path d="M1114,1038.5 q0,-1.8 1.8,-1.8 h8 l3,3 h15.7 q1.8,0 1.8,1.8 v3 h-30.3z" fill="#e2a00a"/><rect x="1114" y="1040.5" width="30" height="23" rx="1" fill="url(#fld)"/>
<path d="M1119,1063.5 v-5.5 q0,-2 2,-2 h15.6 q2,0 2,2 v5.5z" fill="#1a7fd6"/><rect x="1122.5" y="1059" width="12.5" height="1.2" fill="#0d4a8a"/>
<defs><linearGradient id="sto" x1="0" y1="0" x2="1" y2="1"><stop offset="0" stop-color="#1d5fb0"/><stop offset="1" stop-color="#17335f"/></linearGradient></defs>
<path d="M1176.8,1041.5 v-3.5 q0,-1.5 1.5,-1.5 h10.8 q1.5,0 1.5,1.5 v3.5" fill="none" stroke="#38c8f5" stroke-width="2"/>
<path d="M1169,1041.5 q0,-1.5 1.5,-1.5 h26 q1.5,0 1.5,1.5 v19 q0,4.7 -4.7,4.7 h-19.6 q-4.7,0 -4.7,-4.7z" fill="url(#sto)"/>
<rect x="1178" y="1046.8" width="5.3" height="5.3" fill="#f25022"/><rect x="1183.8" y="1046.8" width="5.3" height="5.3" fill="#7fba00"/><rect x="1178" y="1052.6" width="5.3" height="5.3" fill="#00a4ef"/><rect x="1183.8" y="1052.6" width="5.3" height="5.3" fill="#ffb900"/>
<defs><linearGradient id="olk1" x1="0" y1="0" x2="1" y2="1"><stop offset="0" stop-color="#4fd4ff"/><stop offset="1" stop-color="#1a6fe0"/></linearGradient></defs>
<path d="M1226,1047 l13,-10 q1.5,-1 3,0 l11,8 v15 q0,4 -4,4 h-19 q-4,0 -4,-4z" fill="url(#olk1)"/><path d="M1232,1047 l13,-9 l8,6 l-14,9z" fill="#3b4fd8" opacity=".8"/><path d="M1226,1050 l14,9 l13,-9 v10 q0,4 -4,4 h-19 q-4,0 -4,-4z" fill="#58d0ff"/>
<rect x="1224" y="1049.3" width="12" height="11.5" rx="2" fill="#1357c4"/><ellipse cx="1230" cy="1055" rx="3.3" ry="3.5" fill="none" stroke="#fff" stroke-width="1.8"/>
<path d="M1293.9,1049.9 L1280.91,1042.40 A15,15 0 0 1 1306.89,1042.40 Z" fill="#db3a2f"/>
<path d="M1293.9,1049.9 L1306.89,1042.40 A15,15 0 0 1 1293.90,1064.90 Z" fill="#f6c026"/>
<path d="M1293.9,1049.9 L1293.90,1064.90 A15,15 0 0 1 1280.91,1042.40 Z" fill="#2f9e47"/>
<circle cx="1293.9" cy="1049.9" r="7.2" fill="#fff"/><circle cx="1293.9" cy="1049.9" r="5.8" fill="#3a86e8"/>
<rect x="1334.2" y="1034.8" width="29.6" height="30.1" rx="6" fill="#3438b8"/>
<path d="M1347.8,1041.5 l8,4.5 M1341,1045 l6.8,-3.5 M1341,1045 v9 l6,3.5 M1357.5,1048.5 v6.5 l-6,3.5 M1348.5,1058 v-6 l7,-4" fill="none" stroke="#fff" stroke-width="1.8" stroke-linecap="round"/>
<rect x="1379.7" y="1025.5" width="48.3" height="49.2" rx="5" fill="#f6f6f6" stroke="#e6e6e6" stroke-width=".8"/>
<path d="M1415,1039.5 h2.8 v25.4 h-2.8z" fill="#8f3a08"/>
<path d="M1394.5,1034.8 h20.5 q2.5,0 2.5,2.5 v19 h-23z" fill="#ff6a00"/><path d="M1389.9,1037 l4.6,-2.2 v21.4 l-4.6,2.2z" fill="#ff9a48"/>
<path d="M1392.5,1056.2 h23 v8.7 h-21 q-2,0 -2,-2z" fill="#9a3a0a"/>
<path d="M1402.5,1040 h8.5 v3 h-5 v3 h4.5 v3 h-4.5 v5.5 h-3.5 z" fill="#fff"/>
<text x="1404" y="1063" font-size="6.2" font-family="Liberation Sans" font-weight="bold" fill="#f0d0b8" text-anchor="middle">FUS</text>
<rect x="1015.5" y="1070.2" width="8" height="3.6" rx="1.8" fill="#8a8a8a"/>
<rect x="1069.5" y="1070.2" width="8" height="3.6" rx="1.8" fill="#8a8a8a"/>
<rect x="1124.5" y="1070.2" width="8" height="3.6" rx="1.8" fill="#8a8a8a"/>
<rect x="1289.9" y="1070.2" width="8" height="3.6" rx="1.8" fill="#8a8a8a"/>
<rect x="1345" y="1070.2" width="8" height="3.6" rx="1.8" fill="#8a8a8a"/>
<rect x="1393.9" y="1069.8" width="19.9" height="4" rx="2" fill="#1a78d6"/>
<g transform="translate(0,-1.5)">
<path d="M1572,1054 l6,-6 l6,6" fill="none" stroke="#1a1a1a" stroke-width="1.5"/>
<path d="M1611,1057 h14 q4,0 4,-4 q0,-4 -4,-4 q-1,-5 -6,-5 q-4,0 -6,4 q-4,0 -4,4.5 q0,4.5 2,4.5z" fill="none" stroke="#1a1a1a" stroke-width="1.4"/><path d="M1609,1043 l18,16" stroke="#1a1a1a" stroke-width="1.4"/>
<path d="M1666,1046 q-4,-6 -10,-4 q-4,2 -5,6 M1650,1055 q4,6 10,4 q4,-2 5,-6" fill="none" stroke="#1a1a1a" stroke-width="1.5"/><path d="M1666,1042 v5 h-5 M1650,1059 v-5 h5" fill="none" stroke="#1a1a1a" stroke-width="1.5"/><circle cx="1663" cy="1057" r="4.5" fill="#1a78d6"/>
<path d="M1688,1047 q10,-8 20,0 M1691,1051 q7,-5 14,0 M1694,1055 q4,-3 8,0" fill="none" stroke="#1a1a1a" stroke-width="1.4"/><circle cx="1698" cy="1058" r="1.6" fill="#1a1a1a"/>
<path d="M1719,1047 h4 l6,-5 v17 l-6,-5 h-4z" fill="none" stroke="#1a1a1a" stroke-width="1.4"/><path d="M1732,1047 q2,3.5 0,7 M1735,1044 q4,6.5 0,13 M1738,1041 q6,9.5 0,19" fill="none" stroke="#1a1a1a" stroke-width="1.3"/>
<rect x="1749" y="1046" width="16" height="10" rx="1.5" fill="none" stroke="#1a1a1a" stroke-width="1.4"/><rect x="1765" y="1049" width="2" height="4" fill="#1a1a1a"/><rect x="1751" y="1048" width="10" height="6" fill="#1a1a1a"/><path d="M1752,1043 l-3,4 h3 l-2,4" fill="none" stroke="#1a1a1a" stroke-width="1.2"/>
</g>
<path d="M1879,1061 q2,-2 2,-8 q0,-7 7,-8 q7,1 7,8 q0,6 2,8z" fill="#1a1a1a"/><circle cx="1888" cy="1064" r="2" fill="#1a1a1a"/>
<text x="1887" y="1058" font-size="8" font-family="Liberation Sans" font-weight="bold" fill="#fff">Z</text><text x="1892" y="1049" font-size="7" font-family="Liberation Sans" font-weight="bold" fill="#1a1a1a">z</text>
</svg>
<div class="t" style="left:64px;top:1032px;font-size:15px;color:#1a1a1a">2°C</div>
<div class="t" style="left:64px;top:1052px;font-size:15px;color:#555">Clear</div>
<div class="t" style="left:594px;top:1043px;font-size:16px;color:#555">Search</div>
<div class="t" style="left:1829px;top:1032px;font-size:15px;color:#1a1a1a">14:36</div>
<div class="t" style="left:1789px;top:1052px;font-size:15px;color:#1a1a1a">09/12/2025</div>
</body></html>
